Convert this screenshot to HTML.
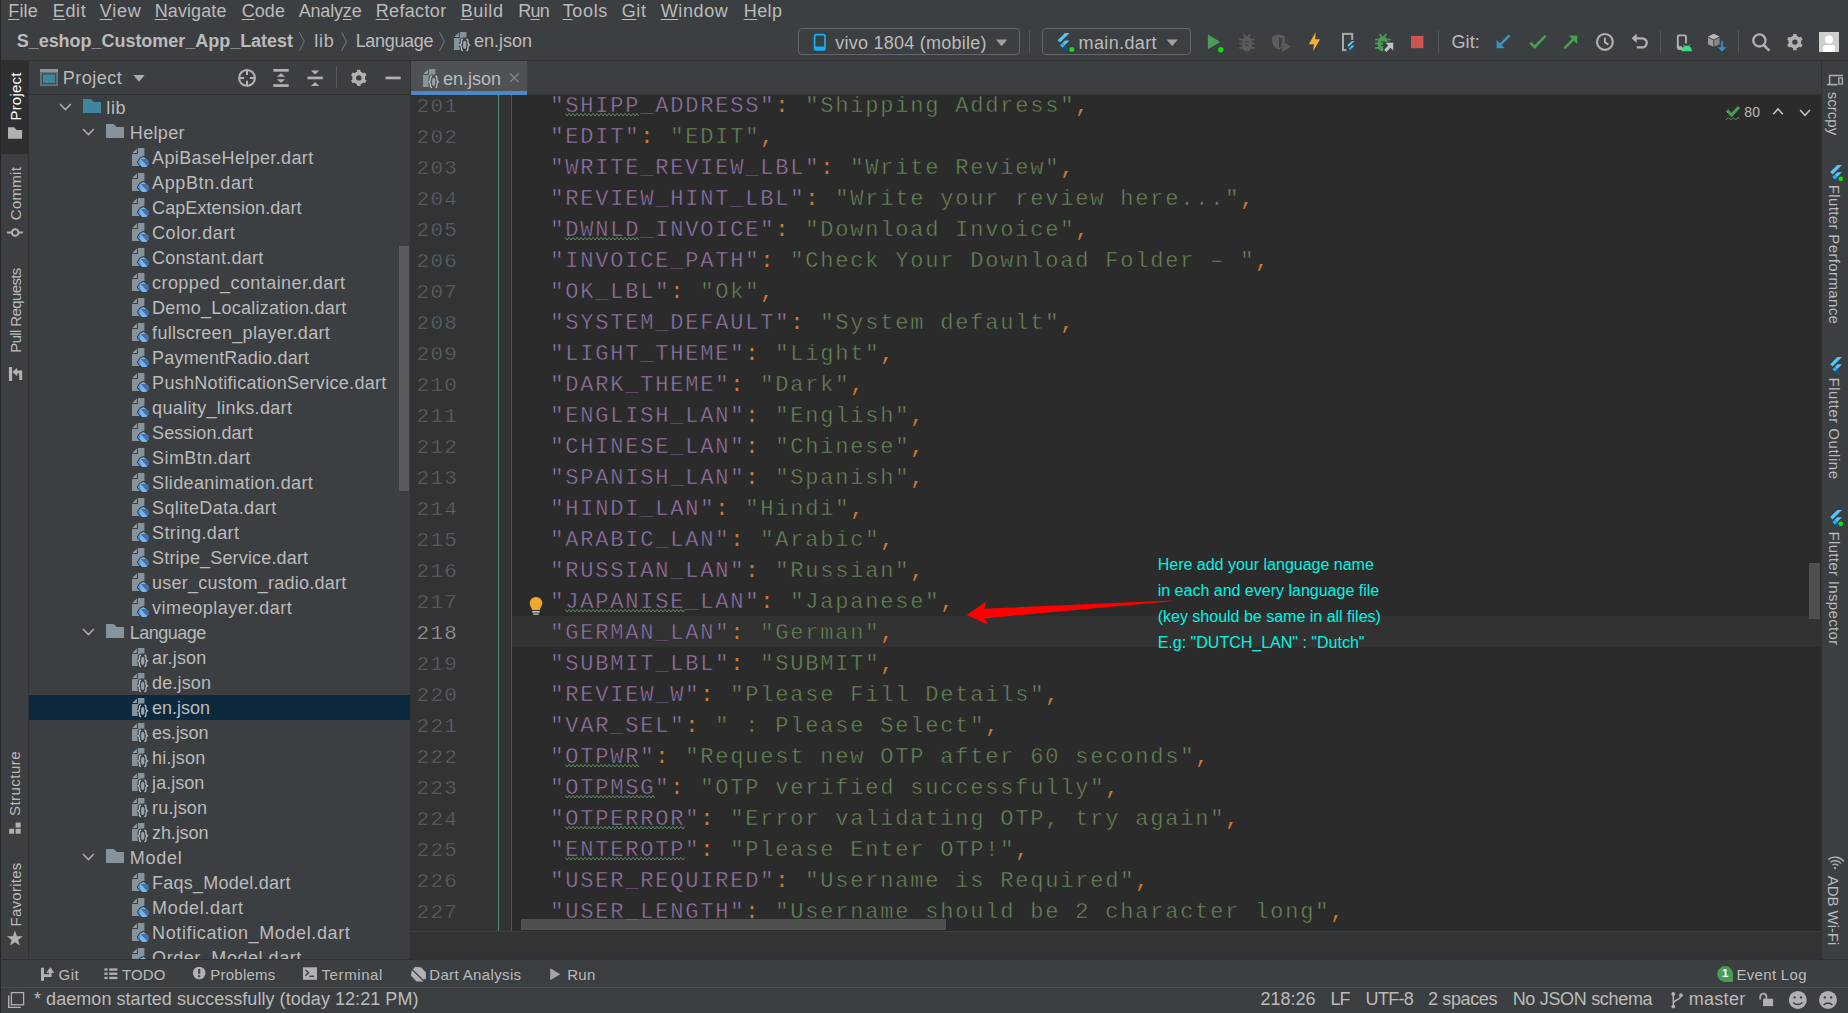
<!DOCTYPE html>
<html lang="en"><head><meta charset="utf-8"><title>en.json - S_eshop_Customer_App_Latest</title><style>
html,body{margin:0;padding:0;background:#3c3f41;}
body{width:1848px;height:1013px;position:relative;overflow:hidden;font-family:"Liberation Sans", sans-serif;}
div,span,svg{position:absolute;display:block;white-space:pre;}
span u{text-decoration:underline;text-underline-offset:2px;text-decoration-thickness:1px;}
.c{font-family:"Liberation Mono", monospace;font-size:22px;line-height:31px;height:31px;letter-spacing:1.798px;}
.c{-webkit-text-stroke:0.5px #2b2b2b;}
.c.n{-webkit-text-stroke:0.45px #313335;font-size:21px;letter-spacing:1.3px;}
.c b{font-weight:400;color:#9876aa;}
.c em{-webkit-text-stroke:0;}
.c var{font-style:normal;color:#6a8759;}
.c em{font-style:normal;color:#cc7832;}
</style></head>
<body>
<div style="left:0px;top:60px;width:1848px;height:1px;background:#323232;"></div>
<div style="left:0px;top:0px;width:1px;height:1013px;background:#232526;"></div>
<div style="left:1px;top:61px;width:28px;height:93px;background:#2d2f30;"></div>
<div style="left:28px;top:61px;width:1px;height:898px;background:#323232;"></div>
<div style="left:29px;top:94px;width:381px;height:1px;background:#323232;"></div>
<div style="left:410px;top:61px;width:1px;height:898px;background:#323232;"></div>
<div style="left:411px;top:61px;width:1411px;height:34px;background:#3c3f41;"></div>
<div style="left:411px;top:61px;width:116px;height:30px;background:#4e5254;"></div>
<div style="left:411px;top:91px;width:116px;height:4px;background:#4a88c7;"></div>
<div style="left:527px;top:94px;width:1295px;height:1px;background:#323232;"></div>
<div style="left:411px;top:95px;width:1411px;height:836px;background:#2b2b2b;"></div>
<div style="left:411px;top:95px;width:101px;height:836px;background:#313335;"></div>
<div style="left:498px;top:95px;width:1px;height:836px;background:#5a8a80;"></div>
<div style="left:511px;top:95px;width:1px;height:836px;background:#555555;"></div>
<div style="left:512px;top:616px;width:1310px;height:31px;background:#323232;"></div>
<div style="left:411px;top:931px;width:1411px;height:28px;background:#313335;"></div>
<div style="left:1809px;top:563px;width:11px;height:56px;background:#4f4f4f;"></div>
<div style="left:1822px;top:61px;width:26px;height:898px;background:#3c3f41;"></div>
<div style="left:1821px;top:61px;width:1px;height:898px;background:#323232;"></div>
<div style="left:411px;top:931px;width:1411px;height:1px;background:#3a3c3e;"></div>
<div style="left:0px;top:959px;width:1848px;height:1px;background:#323232;"></div>
<div style="left:1px;top:987px;width:1847px;height:1px;background:#4b4d4f;"></div>
<div style="left:29px;top:695px;width:381px;height:25px;background:#0d293e;"></div>
<div style="left:399px;top:246px;width:10px;height:245px;background:#595b5d;"></div>
<span style="left:8.20px;top:1.76px;font-size:18px;line-height:18px;color:#bbbbbb;letter-spacing:0.196px;"><u>F</u>ile</span>
<span style="left:52.70px;top:1.76px;font-size:18px;line-height:18px;color:#bbbbbb;letter-spacing:0.692px;"><u>E</u>dit</span>
<span style="left:99.70px;top:1.76px;font-size:18px;line-height:18px;color:#bbbbbb;letter-spacing:0.774px;"><u>V</u>iew</span>
<span style="left:154.70px;top:1.76px;font-size:18px;line-height:18px;color:#bbbbbb;letter-spacing:0.094px;"><u>N</u>avigate</span>
<span style="left:241.70px;top:1.76px;font-size:18px;line-height:18px;color:#bbbbbb;letter-spacing:0.067px;"><u>C</u>ode</span>
<span style="left:298.70px;top:1.76px;font-size:18px;line-height:18px;color:#bbbbbb;letter-spacing:-0.178px;">Analy<u>z</u>e</span>
<span style="left:375.70px;top:1.76px;font-size:18px;line-height:18px;color:#bbbbbb;letter-spacing:0.346px;"><u>R</u>efactor</span>
<span style="left:460.70px;top:1.76px;font-size:18px;line-height:18px;color:#bbbbbb;letter-spacing:0.554px;"><u>B</u>uild</span>
<span style="left:518.20px;top:1.76px;font-size:18px;line-height:18px;color:#bbbbbb;letter-spacing:-0.744px;">R<u>u</u>n</span>
<span style="left:562.70px;top:1.76px;font-size:18px;line-height:18px;color:#bbbbbb;letter-spacing:0.654px;"><u>T</u>ools</span>
<span style="left:621.70px;top:1.76px;font-size:18px;line-height:18px;color:#bbbbbb;letter-spacing:0.595px;"><u>G</u>it</span>
<span style="left:660.70px;top:1.76px;font-size:18px;line-height:18px;color:#bbbbbb;letter-spacing:0.628px;"><u>W</u>indow</span>
<span style="left:743.70px;top:1.76px;font-size:18px;line-height:18px;color:#bbbbbb;letter-spacing:0.442px;"><u>H</u>elp</span>
<span style="left:16.70px;top:32.26px;font-size:18px;line-height:18px;color:#bbbbbb;font-weight:700;letter-spacing:-0.029px;">S_eshop_Customer_App_Latest</span>
<span style="left:314.20px;top:32.26px;font-size:18px;line-height:18px;color:#bbbbbb;letter-spacing:0.828px;">lib</span>
<span style="left:355.70px;top:32.26px;font-size:18px;line-height:18px;color:#bbbbbb;letter-spacing:-0.324px;">Language</span>
<span style="left:474.00px;top:32.26px;font-size:18px;line-height:18px;color:#bbbbbb;letter-spacing:-0.007px;">en.json</span>
<span style="left:835.30px;top:33.76px;font-size:18px;line-height:18px;color:#bbbbbb;letter-spacing:0.246px;">vivo 1804 (mobile)</span>
<span style="left:1078.50px;top:33.76px;font-size:18px;line-height:18px;color:#bbbbbb;letter-spacing:0.384px;">main.dart</span>
<span style="left:1451.50px;top:32.76px;font-size:18px;line-height:18px;color:#bbbbbb;letter-spacing:0.121px;">Git:</span>
<span style="left:62.80px;top:68.76px;font-size:18px;line-height:18px;color:#bbbbbb;letter-spacing:0.481px;">Project</span>
<span style="left:443.00px;top:69.76px;font-size:18px;line-height:18px;color:#bbbbbb;letter-spacing:-0.007px;">en.json</span>
<div style="left:29px;top:95px;width:381px;height:864px;overflow:hidden;background:none">
<span style="left:77.30px;top:3.76px;font-size:18px;line-height:18px;color:#bbbbbb;letter-spacing:0.661px;">lib</span>
<span style="left:100.80px;top:28.76px;font-size:18px;line-height:18px;color:#bbbbbb;letter-spacing:0.345px;">Helper</span>
<span style="left:123.10px;top:53.76px;font-size:18px;line-height:18px;color:#bbbbbb;letter-spacing:0.350px;">ApiBaseHelper.dart</span>
<span style="left:123.10px;top:78.76px;font-size:18px;line-height:18px;color:#bbbbbb;letter-spacing:0.594px;">AppBtn.dart</span>
<span style="left:123.10px;top:103.76px;font-size:18px;line-height:18px;color:#bbbbbb;letter-spacing:0.083px;">CapExtension.dart</span>
<span style="left:123.10px;top:128.76px;font-size:18px;line-height:18px;color:#bbbbbb;letter-spacing:0.515px;">Color.dart</span>
<span style="left:123.10px;top:153.76px;font-size:18px;line-height:18px;color:#bbbbbb;letter-spacing:0.249px;">Constant.dart</span>
<span style="left:123.10px;top:178.76px;font-size:18px;line-height:18px;color:#bbbbbb;letter-spacing:0.421px;">cropped_container.dart</span>
<span style="left:123.10px;top:203.76px;font-size:18px;line-height:18px;color:#bbbbbb;letter-spacing:0.236px;">Demo_Localization.dart</span>
<span style="left:123.10px;top:228.76px;font-size:18px;line-height:18px;color:#bbbbbb;letter-spacing:0.313px;">fullscreen_player.dart</span>
<span style="left:123.10px;top:253.76px;font-size:18px;line-height:18px;color:#bbbbbb;letter-spacing:0.177px;">PaymentRadio.dart</span>
<span style="left:123.10px;top:278.76px;font-size:18px;line-height:18px;color:#bbbbbb;letter-spacing:0.300px;">PushNotificationService.dart</span>
<span style="left:123.10px;top:303.76px;font-size:18px;line-height:18px;color:#bbbbbb;letter-spacing:0.340px;">quality_links.dart</span>
<span style="left:123.10px;top:328.76px;font-size:18px;line-height:18px;color:#bbbbbb;letter-spacing:0.045px;">Session.dart</span>
<span style="left:123.10px;top:353.76px;font-size:18px;line-height:18px;color:#bbbbbb;letter-spacing:0.423px;">SimBtn.dart</span>
<span style="left:123.10px;top:378.76px;font-size:18px;line-height:18px;color:#bbbbbb;letter-spacing:0.369px;">Slideanimation.dart</span>
<span style="left:123.10px;top:403.76px;font-size:18px;line-height:18px;color:#bbbbbb;letter-spacing:0.361px;">SqliteData.dart</span>
<span style="left:123.10px;top:428.76px;font-size:18px;line-height:18px;color:#bbbbbb;letter-spacing:0.387px;">String.dart</span>
<span style="left:123.10px;top:453.76px;font-size:18px;line-height:18px;color:#bbbbbb;letter-spacing:0.164px;">Stripe_Service.dart</span>
<span style="left:123.10px;top:478.76px;font-size:18px;line-height:18px;color:#bbbbbb;letter-spacing:0.236px;">user_custom_radio.dart</span>
<span style="left:123.10px;top:503.76px;font-size:18px;line-height:18px;color:#bbbbbb;letter-spacing:0.514px;">vimeoplayer.dart</span>
<span style="left:100.80px;top:528.76px;font-size:18px;line-height:18px;color:#bbbbbb;letter-spacing:-0.512px;">Language</span>
<span style="left:123.10px;top:553.76px;font-size:18px;line-height:18px;color:#bbbbbb;letter-spacing:0.193px;">ar.json</span>
<span style="left:123.10px;top:578.76px;font-size:18px;line-height:18px;color:#bbbbbb;letter-spacing:0.136px;">de.json</span>
<span style="left:123.10px;top:603.76px;font-size:18px;line-height:18px;color:#bbbbbb;letter-spacing:-0.007px;">en.json</span>
<span style="left:123.10px;top:628.76px;font-size:18px;line-height:18px;color:#bbbbbb;letter-spacing:-0.121px;">es.json</span>
<span style="left:123.10px;top:653.76px;font-size:18px;line-height:18px;color:#bbbbbb;letter-spacing:0.181px;">hi.json</span>
<span style="left:123.10px;top:678.76px;font-size:18px;line-height:18px;color:#bbbbbb;letter-spacing:0.038px;">ja.json</span>
<span style="left:123.10px;top:703.76px;font-size:18px;line-height:18px;color:#bbbbbb;letter-spacing:0.153px;">ru.json</span>
<span style="left:123.10px;top:728.76px;font-size:18px;line-height:18px;color:#bbbbbb;letter-spacing:-0.121px;">zh.json</span>
<span style="left:100.80px;top:753.76px;font-size:18px;line-height:18px;color:#bbbbbb;letter-spacing:0.714px;">Model</span>
<span style="left:123.10px;top:778.76px;font-size:18px;line-height:18px;color:#bbbbbb;letter-spacing:0.235px;">Faqs_Model.dart</span>
<span style="left:123.10px;top:803.76px;font-size:18px;line-height:18px;color:#bbbbbb;letter-spacing:0.665px;">Model.dart</span>
<span style="left:123.10px;top:828.76px;font-size:18px;line-height:18px;color:#bbbbbb;letter-spacing:0.617px;">Notification_Model.dart</span>
<span style="left:123.10px;top:853.76px;font-size:18px;line-height:18px;color:#bbbbbb;letter-spacing:0.539px;">Order_Model.dart</span>
</div>
<span style="left:-9.30px;top:88.90px;width:48.20px;height:15px;font-size:15px;line-height:15px;color:#ffffff;letter-spacing:0.216px;transform:rotate(-90deg);">Project</span>
<span style="left:-11.10px;top:186.00px;width:53.40px;height:15px;font-size:15px;line-height:15px;color:#bbbbbb;letter-spacing:0.288px;transform:rotate(-90deg);">Commit</span>
<span style="left:-27.45px;top:303.05px;width:84.50px;height:15px;font-size:15px;line-height:15px;color:#bbbbbb;letter-spacing:-0.620px;transform:rotate(-90deg);">Pull Requests</span>
<span style="left:-17.70px;top:776.00px;width:65.00px;height:15px;font-size:15px;line-height:15px;color:#bbbbbb;letter-spacing:0.460px;transform:rotate(-90deg);">Structure</span>
<span style="left:-17.20px;top:886.80px;width:64.00px;height:15px;font-size:15px;line-height:15px;color:#bbbbbb;letter-spacing:0.257px;transform:rotate(-90deg);">Favorites</span>
<span style="left:1812.45px;top:106.25px;width:43.50px;height:15px;font-size:15px;line-height:15px;color:#bbbbbb;letter-spacing:0.026px;transform:rotate(90deg);">scrcpy</span>
<span style="left:1765.10px;top:247.30px;width:139.60px;height:15px;font-size:15px;line-height:15px;color:#bbbbbb;letter-spacing:0.371px;transform:rotate(90deg);">Flutter Performance</span>
<span style="left:1783.20px;top:421.00px;width:102.00px;height:15px;font-size:15px;line-height:15px;color:#bbbbbb;letter-spacing:0.519px;transform:rotate(90deg);">Flutter Outline</span>
<span style="left:1777.20px;top:580.50px;width:114.00px;height:15px;font-size:15px;line-height:15px;color:#bbbbbb;letter-spacing:0.330px;transform:rotate(90deg);">Flutter Inspector</span>
<span style="left:1799.45px;top:902.75px;width:69.50px;height:15px;font-size:15px;line-height:15px;color:#bbbbbb;letter-spacing:-0.056px;transform:rotate(90deg);">ADB Wi-Fi</span>
<span style="left:58.50px;top:967.30px;font-size:15px;line-height:15px;color:#bbbbbb;letter-spacing:0.526px;">Git</span>
<span style="left:122.00px;top:967.30px;font-size:15px;line-height:15px;color:#bbbbbb;letter-spacing:0.109px;">TODO</span>
<span style="left:210.25px;top:967.30px;font-size:15px;line-height:15px;color:#bbbbbb;letter-spacing:0.236px;">Problems</span>
<span style="left:321.50px;top:967.30px;font-size:15px;line-height:15px;color:#bbbbbb;letter-spacing:0.602px;">Terminal</span>
<span style="left:429.20px;top:967.30px;font-size:15px;line-height:15px;color:#bbbbbb;letter-spacing:0.366px;">Dart Analysis</span>
<span style="left:567.20px;top:967.30px;font-size:15px;line-height:15px;color:#bbbbbb;letter-spacing:0.290px;">Run</span>
<span style="left:1736.40px;top:967.30px;font-size:15px;line-height:15px;color:#bbbbbb;letter-spacing:0.326px;">Event Log</span>
<span style="left:34.00px;top:990.26px;font-size:18px;line-height:18px;color:#bbbbbb;letter-spacing:0.050px;">* daemon started successfully (today 12:21 PM)</span>
<span style="left:1260.40px;top:990.26px;font-size:18px;line-height:18px;color:#bbbbbb;letter-spacing:0.006px;">218:26</span>
<span style="left:1330.40px;top:990.26px;font-size:18px;line-height:18px;color:#bbbbbb;letter-spacing:-0.858px;">LF</span>
<span style="left:1365.60px;top:990.26px;font-size:18px;line-height:18px;color:#bbbbbb;letter-spacing:-0.680px;">UTF-8</span>
<span style="left:1428.00px;top:990.26px;font-size:18px;line-height:18px;color:#bbbbbb;letter-spacing:-0.368px;">2 spaces</span>
<span style="left:1512.70px;top:990.26px;font-size:18px;line-height:18px;color:#bbbbbb;letter-spacing:-0.318px;">No JSON schema</span>
<span style="left:1688.70px;top:990.26px;font-size:18px;line-height:18px;color:#bbbbbb;letter-spacing:0.297px;">master</span>
<span style="left:1744.20px;top:105.15px;font-size:14px;line-height:14px;color:#bbbbbb;letter-spacing:0.211px;">80</span>
<div style="left:411px;top:95px;width:1411px;height:836px;overflow:hidden;background:none">
<span class="c n" style="left:5.5px;top:-4px;color:#606366">201</span>
<svg style="left:154.29999999999995px;top:17.9px" width="75" height="3.4" viewBox="0 0 75 3.4"><polyline points="0.0 0.4 2.0 3.0 4.0 0.4 6.0 3.0 8.0 0.4 10.0 3.0 12.0 0.4 14.0 3.0 16.0 0.4 18.0 3.0 20.0 0.4 22.0 3.0 24.0 0.4 26.0 3.0 28.0 0.4 30.0 3.0 32.0 0.4 34.0 3.0 36.0 0.4 38.0 3.0 40.0 0.4 42.0 3.0 44.0 0.4 46.0 3.0 48.0 0.4 50.0 3.0 52.0 0.4 54.0 3.0 56.0 0.4 58.0 3.0 60.0 0.4 62.0 3.0 64.0 0.4 66.0 3.0 68.0 0.4 70.0 3.0 72.0 0.4 74.0 3.0" fill="none" stroke="#5f9a62" stroke-width="0.9"/></svg>
<span class="c" style="left:139.29999999999995px;top:-4px"><b>"SHIPP_ADDRESS"</b><em>:</em> <var>"Shipping Address"</var><em>,</em></span>
<span class="c n" style="left:5.5px;top:27px;color:#606366">202</span>
<span class="c" style="left:139.29999999999995px;top:27px"><b>"EDIT"</b><em>:</em> <var>"EDIT"</var><em>,</em></span>
<span class="c n" style="left:5.5px;top:58px;color:#606366">203</span>
<span class="c" style="left:139.29999999999995px;top:58px"><b>"WRITE_REVIEW_LBL"</b><em>:</em> <var>"Write Review"</var><em>,</em></span>
<span class="c n" style="left:5.5px;top:89px;color:#606366">204</span>
<span class="c" style="left:139.29999999999995px;top:89px"><b>"REVIEW_HINT_LBL"</b><em>:</em> <var>"Write your review here..."</var><em>,</em></span>
<span class="c n" style="left:5.5px;top:120px;color:#606366">205</span>
<svg style="left:154.29999999999995px;top:141.9px" width="75" height="3.4" viewBox="0 0 75 3.4"><polyline points="0.0 0.4 2.0 3.0 4.0 0.4 6.0 3.0 8.0 0.4 10.0 3.0 12.0 0.4 14.0 3.0 16.0 0.4 18.0 3.0 20.0 0.4 22.0 3.0 24.0 0.4 26.0 3.0 28.0 0.4 30.0 3.0 32.0 0.4 34.0 3.0 36.0 0.4 38.0 3.0 40.0 0.4 42.0 3.0 44.0 0.4 46.0 3.0 48.0 0.4 50.0 3.0 52.0 0.4 54.0 3.0 56.0 0.4 58.0 3.0 60.0 0.4 62.0 3.0 64.0 0.4 66.0 3.0 68.0 0.4 70.0 3.0 72.0 0.4 74.0 3.0" fill="none" stroke="#5f9a62" stroke-width="0.9"/></svg>
<span class="c" style="left:139.29999999999995px;top:120px"><b>"DWNLD_INVOICE"</b><em>:</em> <var>"Download Invoice"</var><em>,</em></span>
<span class="c n" style="left:5.5px;top:151px;color:#606366">206</span>
<span class="c" style="left:139.29999999999995px;top:151px"><b>"INVOICE_PATH"</b><em>:</em> <var>"Check Your Download Folder – "</var><em>,</em></span>
<span class="c n" style="left:5.5px;top:182px;color:#606366">207</span>
<span class="c" style="left:139.29999999999995px;top:182px"><b>"OK_LBL"</b><em>:</em> <var>"Ok"</var><em>,</em></span>
<span class="c n" style="left:5.5px;top:213px;color:#606366">208</span>
<span class="c" style="left:139.29999999999995px;top:213px"><b>"SYSTEM_DEFAULT"</b><em>:</em> <var>"System default"</var><em>,</em></span>
<span class="c n" style="left:5.5px;top:244px;color:#606366">209</span>
<span class="c" style="left:139.29999999999995px;top:244px"><b>"LIGHT_THEME"</b><em>:</em> <var>"Light"</var><em>,</em></span>
<span class="c n" style="left:5.5px;top:275px;color:#606366">210</span>
<span class="c" style="left:139.29999999999995px;top:275px"><b>"DARK_THEME"</b><em>:</em> <var>"Dark"</var><em>,</em></span>
<span class="c n" style="left:5.5px;top:306px;color:#606366">211</span>
<span class="c" style="left:139.29999999999995px;top:306px"><b>"ENGLISH_LAN"</b><em>:</em> <var>"English"</var><em>,</em></span>
<span class="c n" style="left:5.5px;top:337px;color:#606366">212</span>
<span class="c" style="left:139.29999999999995px;top:337px"><b>"CHINESE_LAN"</b><em>:</em> <var>"Chinese"</var><em>,</em></span>
<span class="c n" style="left:5.5px;top:368px;color:#606366">213</span>
<span class="c" style="left:139.29999999999995px;top:368px"><b>"SPANISH_LAN"</b><em>:</em> <var>"Spanish"</var><em>,</em></span>
<span class="c n" style="left:5.5px;top:399px;color:#606366">214</span>
<span class="c" style="left:139.29999999999995px;top:399px"><b>"HINDI_LAN"</b><em>:</em> <var>"Hindi"</var><em>,</em></span>
<span class="c n" style="left:5.5px;top:430px;color:#606366">215</span>
<span class="c" style="left:139.29999999999995px;top:430px"><b>"ARABIC_LAN"</b><em>:</em> <var>"Arabic"</var><em>,</em></span>
<span class="c n" style="left:5.5px;top:461px;color:#606366">216</span>
<span class="c" style="left:139.29999999999995px;top:461px"><b>"RUSSIAN_LAN"</b><em>:</em> <var>"Russian"</var><em>,</em></span>
<span class="c n" style="left:5.5px;top:492px;color:#606366">217</span>
<svg style="left:154.29999999999995px;top:513.9px" width="120" height="3.4" viewBox="0 0 120 3.4"><polyline points="0.0 0.4 2.0 3.0 4.0 0.4 6.0 3.0 8.0 0.4 10.0 3.0 12.0 0.4 14.0 3.0 16.0 0.4 18.0 3.0 20.0 0.4 22.0 3.0 24.0 0.4 26.0 3.0 28.0 0.4 30.0 3.0 32.0 0.4 34.0 3.0 36.0 0.4 38.0 3.0 40.0 0.4 42.0 3.0 44.0 0.4 46.0 3.0 48.0 0.4 50.0 3.0 52.0 0.4 54.0 3.0 56.0 0.4 58.0 3.0 60.0 0.4 62.0 3.0 64.0 0.4 66.0 3.0 68.0 0.4 70.0 3.0 72.0 0.4 74.0 3.0 76.0 0.4 78.0 3.0 80.0 0.4 82.0 3.0 84.0 0.4 86.0 3.0 88.0 0.4 90.0 3.0 92.0 0.4 94.0 3.0 96.0 0.4 98.0 3.0 100.0 0.4 102.0 3.0 104.0 0.4 106.0 3.0 108.0 0.4 110.0 3.0 112.0 0.4 114.0 3.0 116.0 0.4 118.0 3.0 120.0 0.4" fill="none" stroke="#5f9a62" stroke-width="0.9"/></svg>
<span class="c" style="left:139.29999999999995px;top:492px"><b>"JAPANISE_LAN"</b><em>:</em> <var>"Japanese"</var><em>,</em></span>
<span class="c n" style="left:5.5px;top:523px;color:#a4a3a3">218</span>
<span class="c" style="left:139.29999999999995px;top:523px"><b>"GERMAN_LAN"</b><em>:</em> <var>"German"</var><em>,</em></span>
<span class="c n" style="left:5.5px;top:554px;color:#606366">219</span>
<span class="c" style="left:139.29999999999995px;top:554px"><b>"SUBMIT_LBL"</b><em>:</em> <var>"SUBMIT"</var><em>,</em></span>
<span class="c n" style="left:5.5px;top:585px;color:#606366">220</span>
<span class="c" style="left:139.29999999999995px;top:585px"><b>"REVIEW_W"</b><em>:</em> <var>"Please Fill Details"</var><em>,</em></span>
<span class="c n" style="left:5.5px;top:616px;color:#606366">221</span>
<span class="c" style="left:139.29999999999995px;top:616px"><b>"VAR_SEL"</b><em>:</em> <var>" : Please Select"</var><em>,</em></span>
<span class="c n" style="left:5.5px;top:647px;color:#606366">222</span>
<svg style="left:154.29999999999995px;top:668.9px" width="75" height="3.4" viewBox="0 0 75 3.4"><polyline points="0.0 0.4 2.0 3.0 4.0 0.4 6.0 3.0 8.0 0.4 10.0 3.0 12.0 0.4 14.0 3.0 16.0 0.4 18.0 3.0 20.0 0.4 22.0 3.0 24.0 0.4 26.0 3.0 28.0 0.4 30.0 3.0 32.0 0.4 34.0 3.0 36.0 0.4 38.0 3.0 40.0 0.4 42.0 3.0 44.0 0.4 46.0 3.0 48.0 0.4 50.0 3.0 52.0 0.4 54.0 3.0 56.0 0.4 58.0 3.0 60.0 0.4 62.0 3.0 64.0 0.4 66.0 3.0 68.0 0.4 70.0 3.0 72.0 0.4 74.0 3.0" fill="none" stroke="#5f9a62" stroke-width="0.9"/></svg>
<span class="c" style="left:139.29999999999995px;top:647px"><b>"OTPWR"</b><em>:</em> <var>"Request new OTP after 60 seconds"</var><em>,</em></span>
<span class="c n" style="left:5.5px;top:678px;color:#606366">223</span>
<svg style="left:154.29999999999995px;top:699.9px" width="90" height="3.4" viewBox="0 0 90 3.4"><polyline points="0.0 0.4 2.0 3.0 4.0 0.4 6.0 3.0 8.0 0.4 10.0 3.0 12.0 0.4 14.0 3.0 16.0 0.4 18.0 3.0 20.0 0.4 22.0 3.0 24.0 0.4 26.0 3.0 28.0 0.4 30.0 3.0 32.0 0.4 34.0 3.0 36.0 0.4 38.0 3.0 40.0 0.4 42.0 3.0 44.0 0.4 46.0 3.0 48.0 0.4 50.0 3.0 52.0 0.4 54.0 3.0 56.0 0.4 58.0 3.0 60.0 0.4 62.0 3.0 64.0 0.4 66.0 3.0 68.0 0.4 70.0 3.0 72.0 0.4 74.0 3.0 76.0 0.4 78.0 3.0 80.0 0.4 82.0 3.0 84.0 0.4 86.0 3.0 88.0 0.4 90.0 3.0" fill="none" stroke="#5f9a62" stroke-width="0.9"/></svg>
<span class="c" style="left:139.29999999999995px;top:678px"><b>"OTPMSG"</b><em>:</em> <var>"OTP verified successfully"</var><em>,</em></span>
<span class="c n" style="left:5.5px;top:709px;color:#606366">224</span>
<svg style="left:154.29999999999995px;top:730.9px" width="120" height="3.4" viewBox="0 0 120 3.4"><polyline points="0.0 0.4 2.0 3.0 4.0 0.4 6.0 3.0 8.0 0.4 10.0 3.0 12.0 0.4 14.0 3.0 16.0 0.4 18.0 3.0 20.0 0.4 22.0 3.0 24.0 0.4 26.0 3.0 28.0 0.4 30.0 3.0 32.0 0.4 34.0 3.0 36.0 0.4 38.0 3.0 40.0 0.4 42.0 3.0 44.0 0.4 46.0 3.0 48.0 0.4 50.0 3.0 52.0 0.4 54.0 3.0 56.0 0.4 58.0 3.0 60.0 0.4 62.0 3.0 64.0 0.4 66.0 3.0 68.0 0.4 70.0 3.0 72.0 0.4 74.0 3.0 76.0 0.4 78.0 3.0 80.0 0.4 82.0 3.0 84.0 0.4 86.0 3.0 88.0 0.4 90.0 3.0 92.0 0.4 94.0 3.0 96.0 0.4 98.0 3.0 100.0 0.4 102.0 3.0 104.0 0.4 106.0 3.0 108.0 0.4 110.0 3.0 112.0 0.4 114.0 3.0 116.0 0.4 118.0 3.0 120.0 0.4" fill="none" stroke="#5f9a62" stroke-width="0.9"/></svg>
<span class="c" style="left:139.29999999999995px;top:709px"><b>"OTPERROR"</b><em>:</em> <var>"Error validating OTP, try again"</var><em>,</em></span>
<span class="c n" style="left:5.5px;top:740px;color:#606366">225</span>
<svg style="left:154.29999999999995px;top:761.9px" width="120" height="3.4" viewBox="0 0 120 3.4"><polyline points="0.0 0.4 2.0 3.0 4.0 0.4 6.0 3.0 8.0 0.4 10.0 3.0 12.0 0.4 14.0 3.0 16.0 0.4 18.0 3.0 20.0 0.4 22.0 3.0 24.0 0.4 26.0 3.0 28.0 0.4 30.0 3.0 32.0 0.4 34.0 3.0 36.0 0.4 38.0 3.0 40.0 0.4 42.0 3.0 44.0 0.4 46.0 3.0 48.0 0.4 50.0 3.0 52.0 0.4 54.0 3.0 56.0 0.4 58.0 3.0 60.0 0.4 62.0 3.0 64.0 0.4 66.0 3.0 68.0 0.4 70.0 3.0 72.0 0.4 74.0 3.0 76.0 0.4 78.0 3.0 80.0 0.4 82.0 3.0 84.0 0.4 86.0 3.0 88.0 0.4 90.0 3.0 92.0 0.4 94.0 3.0 96.0 0.4 98.0 3.0 100.0 0.4 102.0 3.0 104.0 0.4 106.0 3.0 108.0 0.4 110.0 3.0 112.0 0.4 114.0 3.0 116.0 0.4 118.0 3.0 120.0 0.4" fill="none" stroke="#5f9a62" stroke-width="0.9"/></svg>
<span class="c" style="left:139.29999999999995px;top:740px"><b>"ENTEROTP"</b><em>:</em> <var>"Please Enter OTP!"</var><em>,</em></span>
<span class="c n" style="left:5.5px;top:771px;color:#606366">226</span>
<span class="c" style="left:139.29999999999995px;top:771px"><b>"USER_REQUIRED"</b><em>:</em> <var>"Username is Required"</var><em>,</em></span>
<span class="c n" style="left:5.5px;top:802px;color:#606366">227</span>
<span class="c" style="left:139.29999999999995px;top:802px"><b>"USER_LENGTH"</b><em>:</em> <var>"Username should be 2 character long"</var><em>,</em></span>
</div>
<div style="left:521px;top:919px;width:425px;height:11px;background:rgba(128,128,128,0.42);"></div>
<span style="left:1157.70px;top:557.36px;font-size:16px;line-height:16px;color:#04f2e4;">Here add your language name</span>
<span style="left:1157.70px;top:583.26px;font-size:16px;line-height:16px;color:#04f2e4;">in each and every language file</span>
<span style="left:1157.70px;top:609.16px;font-size:16px;line-height:16px;color:#04f2e4;">(key should be same in all files)</span>
<span style="left:1157.70px;top:635.06px;font-size:16px;line-height:16px;color:#04f2e4;">E.g: &quot;DUTCH_LAN&quot; : &quot;Dutch&quot;</span>
<svg style="left:950px;top:590px" width="240" height="50" viewBox="950 590 240 50"><path d="M966.8 615 L986.5 601.2 L984.2 608.7 L1171.5 600.4 L1171.5 601.3 L984.5 618.4 L988.4 624.9 Z" fill="#fe0000"/></svg>
<svg style="left:58.6px;top:103.1px;" width="13" height="9" viewBox="0 0 13 9"><path d="M1 1 L6.4 6.6 L11.8 1" fill="none" stroke="#adadad" stroke-width="1.5"/></svg>
<svg style="left:83.1px;top:99.2px;" width="18" height="14" viewBox="0 0 18 14"><path d="M0 0 H7.6 L10.8 3 H18 V14 H0 Z" fill="#3e86a0"/></svg>
<svg style="left:81.5px;top:128.1px;" width="13" height="9" viewBox="0 0 13 9"><path d="M1 1 L6.4 6.6 L11.8 1" fill="none" stroke="#adadad" stroke-width="1.5"/></svg>
<svg style="left:106px;top:124.2px;" width="18" height="14" viewBox="0 0 18 14"><path d="M0 0 H7.6 L10.8 3 H18 V14 H0 Z" fill="#87939a"/></svg>

<svg style="left:131.8px;top:148.2px;" width="18" height="20" viewBox="0 0 18 20"><path d="M5.9 0 H12.4 V18 H0 V5.9 H5.9 Z" fill="#87939a"/><path d="M0.4 4.9 L4.9 0.4 V4.9 Z" fill="#909ca3"/><path d="M11.5 8.9 L16.3 12.8 L16.3 16.8 L14.3 19.1 L10 19.1 L6 14.3 L8.1 10.8 Z" fill="#3c3f41" stroke="#3c3f41" stroke-width="2.2" stroke-linejoin="round"/><path d="M11.5 8.9 L16.3 12.8 L16.3 16.8 L14.3 19.1 L10 19.1 L6 14.3 L8.1 10.8 Z" fill="#72b7f4"/><path d="M8.7 11 L14.2 11 L16.3 12.8 L16.3 16.8 L15.2 18.2 Z" fill="#4b6da6"/><path d="M6 14.3 L8.1 10.8 L8.1 16.8 Z" fill="#5a8bd6"/></svg>

<svg style="left:131.8px;top:173.2px;" width="18" height="20" viewBox="0 0 18 20"><path d="M5.9 0 H12.4 V18 H0 V5.9 H5.9 Z" fill="#87939a"/><path d="M0.4 4.9 L4.9 0.4 V4.9 Z" fill="#909ca3"/><path d="M11.5 8.9 L16.3 12.8 L16.3 16.8 L14.3 19.1 L10 19.1 L6 14.3 L8.1 10.8 Z" fill="#3c3f41" stroke="#3c3f41" stroke-width="2.2" stroke-linejoin="round"/><path d="M11.5 8.9 L16.3 12.8 L16.3 16.8 L14.3 19.1 L10 19.1 L6 14.3 L8.1 10.8 Z" fill="#72b7f4"/><path d="M8.7 11 L14.2 11 L16.3 12.8 L16.3 16.8 L15.2 18.2 Z" fill="#4b6da6"/><path d="M6 14.3 L8.1 10.8 L8.1 16.8 Z" fill="#5a8bd6"/></svg>

<svg style="left:131.8px;top:198.2px;" width="18" height="20" viewBox="0 0 18 20"><path d="M5.9 0 H12.4 V18 H0 V5.9 H5.9 Z" fill="#87939a"/><path d="M0.4 4.9 L4.9 0.4 V4.9 Z" fill="#909ca3"/><path d="M11.5 8.9 L16.3 12.8 L16.3 16.8 L14.3 19.1 L10 19.1 L6 14.3 L8.1 10.8 Z" fill="#3c3f41" stroke="#3c3f41" stroke-width="2.2" stroke-linejoin="round"/><path d="M11.5 8.9 L16.3 12.8 L16.3 16.8 L14.3 19.1 L10 19.1 L6 14.3 L8.1 10.8 Z" fill="#72b7f4"/><path d="M8.7 11 L14.2 11 L16.3 12.8 L16.3 16.8 L15.2 18.2 Z" fill="#4b6da6"/><path d="M6 14.3 L8.1 10.8 L8.1 16.8 Z" fill="#5a8bd6"/></svg>

<svg style="left:131.8px;top:223.2px;" width="18" height="20" viewBox="0 0 18 20"><path d="M5.9 0 H12.4 V18 H0 V5.9 H5.9 Z" fill="#87939a"/><path d="M0.4 4.9 L4.9 0.4 V4.9 Z" fill="#909ca3"/><path d="M11.5 8.9 L16.3 12.8 L16.3 16.8 L14.3 19.1 L10 19.1 L6 14.3 L8.1 10.8 Z" fill="#3c3f41" stroke="#3c3f41" stroke-width="2.2" stroke-linejoin="round"/><path d="M11.5 8.9 L16.3 12.8 L16.3 16.8 L14.3 19.1 L10 19.1 L6 14.3 L8.1 10.8 Z" fill="#72b7f4"/><path d="M8.7 11 L14.2 11 L16.3 12.8 L16.3 16.8 L15.2 18.2 Z" fill="#4b6da6"/><path d="M6 14.3 L8.1 10.8 L8.1 16.8 Z" fill="#5a8bd6"/></svg>

<svg style="left:131.8px;top:248.2px;" width="18" height="20" viewBox="0 0 18 20"><path d="M5.9 0 H12.4 V18 H0 V5.9 H5.9 Z" fill="#87939a"/><path d="M0.4 4.9 L4.9 0.4 V4.9 Z" fill="#909ca3"/><path d="M11.5 8.9 L16.3 12.8 L16.3 16.8 L14.3 19.1 L10 19.1 L6 14.3 L8.1 10.8 Z" fill="#3c3f41" stroke="#3c3f41" stroke-width="2.2" stroke-linejoin="round"/><path d="M11.5 8.9 L16.3 12.8 L16.3 16.8 L14.3 19.1 L10 19.1 L6 14.3 L8.1 10.8 Z" fill="#72b7f4"/><path d="M8.7 11 L14.2 11 L16.3 12.8 L16.3 16.8 L15.2 18.2 Z" fill="#4b6da6"/><path d="M6 14.3 L8.1 10.8 L8.1 16.8 Z" fill="#5a8bd6"/></svg>

<svg style="left:131.8px;top:273.2px;" width="18" height="20" viewBox="0 0 18 20"><path d="M5.9 0 H12.4 V18 H0 V5.9 H5.9 Z" fill="#87939a"/><path d="M0.4 4.9 L4.9 0.4 V4.9 Z" fill="#909ca3"/><path d="M11.5 8.9 L16.3 12.8 L16.3 16.8 L14.3 19.1 L10 19.1 L6 14.3 L8.1 10.8 Z" fill="#3c3f41" stroke="#3c3f41" stroke-width="2.2" stroke-linejoin="round"/><path d="M11.5 8.9 L16.3 12.8 L16.3 16.8 L14.3 19.1 L10 19.1 L6 14.3 L8.1 10.8 Z" fill="#72b7f4"/><path d="M8.7 11 L14.2 11 L16.3 12.8 L16.3 16.8 L15.2 18.2 Z" fill="#4b6da6"/><path d="M6 14.3 L8.1 10.8 L8.1 16.8 Z" fill="#5a8bd6"/></svg>

<svg style="left:131.8px;top:298.2px;" width="18" height="20" viewBox="0 0 18 20"><path d="M5.9 0 H12.4 V18 H0 V5.9 H5.9 Z" fill="#87939a"/><path d="M0.4 4.9 L4.9 0.4 V4.9 Z" fill="#909ca3"/><path d="M11.5 8.9 L16.3 12.8 L16.3 16.8 L14.3 19.1 L10 19.1 L6 14.3 L8.1 10.8 Z" fill="#3c3f41" stroke="#3c3f41" stroke-width="2.2" stroke-linejoin="round"/><path d="M11.5 8.9 L16.3 12.8 L16.3 16.8 L14.3 19.1 L10 19.1 L6 14.3 L8.1 10.8 Z" fill="#72b7f4"/><path d="M8.7 11 L14.2 11 L16.3 12.8 L16.3 16.8 L15.2 18.2 Z" fill="#4b6da6"/><path d="M6 14.3 L8.1 10.8 L8.1 16.8 Z" fill="#5a8bd6"/></svg>

<svg style="left:131.8px;top:323.2px;" width="18" height="20" viewBox="0 0 18 20"><path d="M5.9 0 H12.4 V18 H0 V5.9 H5.9 Z" fill="#87939a"/><path d="M0.4 4.9 L4.9 0.4 V4.9 Z" fill="#909ca3"/><path d="M11.5 8.9 L16.3 12.8 L16.3 16.8 L14.3 19.1 L10 19.1 L6 14.3 L8.1 10.8 Z" fill="#3c3f41" stroke="#3c3f41" stroke-width="2.2" stroke-linejoin="round"/><path d="M11.5 8.9 L16.3 12.8 L16.3 16.8 L14.3 19.1 L10 19.1 L6 14.3 L8.1 10.8 Z" fill="#72b7f4"/><path d="M8.7 11 L14.2 11 L16.3 12.8 L16.3 16.8 L15.2 18.2 Z" fill="#4b6da6"/><path d="M6 14.3 L8.1 10.8 L8.1 16.8 Z" fill="#5a8bd6"/></svg>

<svg style="left:131.8px;top:348.2px;" width="18" height="20" viewBox="0 0 18 20"><path d="M5.9 0 H12.4 V18 H0 V5.9 H5.9 Z" fill="#87939a"/><path d="M0.4 4.9 L4.9 0.4 V4.9 Z" fill="#909ca3"/><path d="M11.5 8.9 L16.3 12.8 L16.3 16.8 L14.3 19.1 L10 19.1 L6 14.3 L8.1 10.8 Z" fill="#3c3f41" stroke="#3c3f41" stroke-width="2.2" stroke-linejoin="round"/><path d="M11.5 8.9 L16.3 12.8 L16.3 16.8 L14.3 19.1 L10 19.1 L6 14.3 L8.1 10.8 Z" fill="#72b7f4"/><path d="M8.7 11 L14.2 11 L16.3 12.8 L16.3 16.8 L15.2 18.2 Z" fill="#4b6da6"/><path d="M6 14.3 L8.1 10.8 L8.1 16.8 Z" fill="#5a8bd6"/></svg>

<svg style="left:131.8px;top:373.2px;" width="18" height="20" viewBox="0 0 18 20"><path d="M5.9 0 H12.4 V18 H0 V5.9 H5.9 Z" fill="#87939a"/><path d="M0.4 4.9 L4.9 0.4 V4.9 Z" fill="#909ca3"/><path d="M11.5 8.9 L16.3 12.8 L16.3 16.8 L14.3 19.1 L10 19.1 L6 14.3 L8.1 10.8 Z" fill="#3c3f41" stroke="#3c3f41" stroke-width="2.2" stroke-linejoin="round"/><path d="M11.5 8.9 L16.3 12.8 L16.3 16.8 L14.3 19.1 L10 19.1 L6 14.3 L8.1 10.8 Z" fill="#72b7f4"/><path d="M8.7 11 L14.2 11 L16.3 12.8 L16.3 16.8 L15.2 18.2 Z" fill="#4b6da6"/><path d="M6 14.3 L8.1 10.8 L8.1 16.8 Z" fill="#5a8bd6"/></svg>

<svg style="left:131.8px;top:398.2px;" width="18" height="20" viewBox="0 0 18 20"><path d="M5.9 0 H12.4 V18 H0 V5.9 H5.9 Z" fill="#87939a"/><path d="M0.4 4.9 L4.9 0.4 V4.9 Z" fill="#909ca3"/><path d="M11.5 8.9 L16.3 12.8 L16.3 16.8 L14.3 19.1 L10 19.1 L6 14.3 L8.1 10.8 Z" fill="#3c3f41" stroke="#3c3f41" stroke-width="2.2" stroke-linejoin="round"/><path d="M11.5 8.9 L16.3 12.8 L16.3 16.8 L14.3 19.1 L10 19.1 L6 14.3 L8.1 10.8 Z" fill="#72b7f4"/><path d="M8.7 11 L14.2 11 L16.3 12.8 L16.3 16.8 L15.2 18.2 Z" fill="#4b6da6"/><path d="M6 14.3 L8.1 10.8 L8.1 16.8 Z" fill="#5a8bd6"/></svg>

<svg style="left:131.8px;top:423.2px;" width="18" height="20" viewBox="0 0 18 20"><path d="M5.9 0 H12.4 V18 H0 V5.9 H5.9 Z" fill="#87939a"/><path d="M0.4 4.9 L4.9 0.4 V4.9 Z" fill="#909ca3"/><path d="M11.5 8.9 L16.3 12.8 L16.3 16.8 L14.3 19.1 L10 19.1 L6 14.3 L8.1 10.8 Z" fill="#3c3f41" stroke="#3c3f41" stroke-width="2.2" stroke-linejoin="round"/><path d="M11.5 8.9 L16.3 12.8 L16.3 16.8 L14.3 19.1 L10 19.1 L6 14.3 L8.1 10.8 Z" fill="#72b7f4"/><path d="M8.7 11 L14.2 11 L16.3 12.8 L16.3 16.8 L15.2 18.2 Z" fill="#4b6da6"/><path d="M6 14.3 L8.1 10.8 L8.1 16.8 Z" fill="#5a8bd6"/></svg>

<svg style="left:131.8px;top:448.2px;" width="18" height="20" viewBox="0 0 18 20"><path d="M5.9 0 H12.4 V18 H0 V5.9 H5.9 Z" fill="#87939a"/><path d="M0.4 4.9 L4.9 0.4 V4.9 Z" fill="#909ca3"/><path d="M11.5 8.9 L16.3 12.8 L16.3 16.8 L14.3 19.1 L10 19.1 L6 14.3 L8.1 10.8 Z" fill="#3c3f41" stroke="#3c3f41" stroke-width="2.2" stroke-linejoin="round"/><path d="M11.5 8.9 L16.3 12.8 L16.3 16.8 L14.3 19.1 L10 19.1 L6 14.3 L8.1 10.8 Z" fill="#72b7f4"/><path d="M8.7 11 L14.2 11 L16.3 12.8 L16.3 16.8 L15.2 18.2 Z" fill="#4b6da6"/><path d="M6 14.3 L8.1 10.8 L8.1 16.8 Z" fill="#5a8bd6"/></svg>

<svg style="left:131.8px;top:473.2px;" width="18" height="20" viewBox="0 0 18 20"><path d="M5.9 0 H12.4 V18 H0 V5.9 H5.9 Z" fill="#87939a"/><path d="M0.4 4.9 L4.9 0.4 V4.9 Z" fill="#909ca3"/><path d="M11.5 8.9 L16.3 12.8 L16.3 16.8 L14.3 19.1 L10 19.1 L6 14.3 L8.1 10.8 Z" fill="#3c3f41" stroke="#3c3f41" stroke-width="2.2" stroke-linejoin="round"/><path d="M11.5 8.9 L16.3 12.8 L16.3 16.8 L14.3 19.1 L10 19.1 L6 14.3 L8.1 10.8 Z" fill="#72b7f4"/><path d="M8.7 11 L14.2 11 L16.3 12.8 L16.3 16.8 L15.2 18.2 Z" fill="#4b6da6"/><path d="M6 14.3 L8.1 10.8 L8.1 16.8 Z" fill="#5a8bd6"/></svg>

<svg style="left:131.8px;top:498.2px;" width="18" height="20" viewBox="0 0 18 20"><path d="M5.9 0 H12.4 V18 H0 V5.9 H5.9 Z" fill="#87939a"/><path d="M0.4 4.9 L4.9 0.4 V4.9 Z" fill="#909ca3"/><path d="M11.5 8.9 L16.3 12.8 L16.3 16.8 L14.3 19.1 L10 19.1 L6 14.3 L8.1 10.8 Z" fill="#3c3f41" stroke="#3c3f41" stroke-width="2.2" stroke-linejoin="round"/><path d="M11.5 8.9 L16.3 12.8 L16.3 16.8 L14.3 19.1 L10 19.1 L6 14.3 L8.1 10.8 Z" fill="#72b7f4"/><path d="M8.7 11 L14.2 11 L16.3 12.8 L16.3 16.8 L15.2 18.2 Z" fill="#4b6da6"/><path d="M6 14.3 L8.1 10.8 L8.1 16.8 Z" fill="#5a8bd6"/></svg>

<svg style="left:131.8px;top:523.2px;" width="18" height="20" viewBox="0 0 18 20"><path d="M5.9 0 H12.4 V18 H0 V5.9 H5.9 Z" fill="#87939a"/><path d="M0.4 4.9 L4.9 0.4 V4.9 Z" fill="#909ca3"/><path d="M11.5 8.9 L16.3 12.8 L16.3 16.8 L14.3 19.1 L10 19.1 L6 14.3 L8.1 10.8 Z" fill="#3c3f41" stroke="#3c3f41" stroke-width="2.2" stroke-linejoin="round"/><path d="M11.5 8.9 L16.3 12.8 L16.3 16.8 L14.3 19.1 L10 19.1 L6 14.3 L8.1 10.8 Z" fill="#72b7f4"/><path d="M8.7 11 L14.2 11 L16.3 12.8 L16.3 16.8 L15.2 18.2 Z" fill="#4b6da6"/><path d="M6 14.3 L8.1 10.8 L8.1 16.8 Z" fill="#5a8bd6"/></svg>

<svg style="left:131.8px;top:548.2px;" width="18" height="20" viewBox="0 0 18 20"><path d="M5.9 0 H12.4 V18 H0 V5.9 H5.9 Z" fill="#87939a"/><path d="M0.4 4.9 L4.9 0.4 V4.9 Z" fill="#909ca3"/><path d="M11.5 8.9 L16.3 12.8 L16.3 16.8 L14.3 19.1 L10 19.1 L6 14.3 L8.1 10.8 Z" fill="#3c3f41" stroke="#3c3f41" stroke-width="2.2" stroke-linejoin="round"/><path d="M11.5 8.9 L16.3 12.8 L16.3 16.8 L14.3 19.1 L10 19.1 L6 14.3 L8.1 10.8 Z" fill="#72b7f4"/><path d="M8.7 11 L14.2 11 L16.3 12.8 L16.3 16.8 L15.2 18.2 Z" fill="#4b6da6"/><path d="M6 14.3 L8.1 10.8 L8.1 16.8 Z" fill="#5a8bd6"/></svg>

<svg style="left:131.8px;top:573.2px;" width="18" height="20" viewBox="0 0 18 20"><path d="M5.9 0 H12.4 V18 H0 V5.9 H5.9 Z" fill="#87939a"/><path d="M0.4 4.9 L4.9 0.4 V4.9 Z" fill="#909ca3"/><path d="M11.5 8.9 L16.3 12.8 L16.3 16.8 L14.3 19.1 L10 19.1 L6 14.3 L8.1 10.8 Z" fill="#3c3f41" stroke="#3c3f41" stroke-width="2.2" stroke-linejoin="round"/><path d="M11.5 8.9 L16.3 12.8 L16.3 16.8 L14.3 19.1 L10 19.1 L6 14.3 L8.1 10.8 Z" fill="#72b7f4"/><path d="M8.7 11 L14.2 11 L16.3 12.8 L16.3 16.8 L15.2 18.2 Z" fill="#4b6da6"/><path d="M6 14.3 L8.1 10.8 L8.1 16.8 Z" fill="#5a8bd6"/></svg>

<svg style="left:131.8px;top:598.2px;" width="18" height="20" viewBox="0 0 18 20"><path d="M5.9 0 H12.4 V18 H0 V5.9 H5.9 Z" fill="#87939a"/><path d="M0.4 4.9 L4.9 0.4 V4.9 Z" fill="#909ca3"/><path d="M11.5 8.9 L16.3 12.8 L16.3 16.8 L14.3 19.1 L10 19.1 L6 14.3 L8.1 10.8 Z" fill="#3c3f41" stroke="#3c3f41" stroke-width="2.2" stroke-linejoin="round"/><path d="M11.5 8.9 L16.3 12.8 L16.3 16.8 L14.3 19.1 L10 19.1 L6 14.3 L8.1 10.8 Z" fill="#72b7f4"/><path d="M8.7 11 L14.2 11 L16.3 12.8 L16.3 16.8 L15.2 18.2 Z" fill="#4b6da6"/><path d="M6 14.3 L8.1 10.8 L8.1 16.8 Z" fill="#5a8bd6"/></svg>
<svg style="left:81.5px;top:628.1px;" width="13" height="9" viewBox="0 0 13 9"><path d="M1 1 L6.4 6.6 L11.8 1" fill="none" stroke="#adadad" stroke-width="1.5"/></svg>
<svg style="left:106px;top:624.2px;" width="18" height="14" viewBox="0 0 18 14"><path d="M0 0 H7.6 L10.8 3 H18 V14 H0 Z" fill="#87939a"/></svg>

<svg style="left:131.8px;top:648.2px;" width="18" height="20" viewBox="0 0 18 20"><path d="M5.9 0 H12.4 V18 H0 V5.9 H5.9 Z" fill="#87939a"/><path d="M0.4 4.9 L4.9 0.4 V4.9 Z" fill="#909ca3"/><path d="M9 7.2 C6.8 7.2 7.7 9.6 7.4 11.2 C7.2 12.3 6.4 12.7 5.4 12.85 C6.4 13 7.2 13.4 7.4 14.5 C7.7 16.1 6.8 18.5 9 18.5" fill="none" stroke="#3c3f41" stroke-width="3.6" stroke-linecap="square"/><path d="M12.4 7.2 C14.6 7.2 13.7 9.6 14 11.2 C14.2 12.3 15 12.7 16 12.85 C15 13 14.2 13.4 14 14.5 C13.7 16.1 14.6 18.5 12.4 18.5" fill="none" stroke="#3c3f41" stroke-width="3.6" stroke-linecap="square"/><ellipse cx="10.7" cy="12.85" rx="2.9" ry="5.4" fill="#3c3f41"/><path d="M9 7.2 C6.8 7.2 7.7 9.6 7.4 11.2 C7.2 12.3 6.4 12.7 5.4 12.85 C6.4 13 7.2 13.4 7.4 14.5 C7.7 16.1 6.8 18.5 9 18.5" fill="none" stroke="#b2bcc3" stroke-width="1.35"/><path d="M12.4 7.2 C14.6 7.2 13.7 9.6 14 11.2 C14.2 12.3 15 12.7 16 12.85 C15 13 14.2 13.4 14 14.5 C13.7 16.1 14.6 18.5 12.4 18.5" fill="none" stroke="#b2bcc3" stroke-width="1.35"/><ellipse cx="10.7" cy="12.85" rx="1.7" ry="4.2" fill="#96a2a9"/></svg>

<svg style="left:131.8px;top:673.2px;" width="18" height="20" viewBox="0 0 18 20"><path d="M5.9 0 H12.4 V18 H0 V5.9 H5.9 Z" fill="#87939a"/><path d="M0.4 4.9 L4.9 0.4 V4.9 Z" fill="#909ca3"/><path d="M9 7.2 C6.8 7.2 7.7 9.6 7.4 11.2 C7.2 12.3 6.4 12.7 5.4 12.85 C6.4 13 7.2 13.4 7.4 14.5 C7.7 16.1 6.8 18.5 9 18.5" fill="none" stroke="#3c3f41" stroke-width="3.6" stroke-linecap="square"/><path d="M12.4 7.2 C14.6 7.2 13.7 9.6 14 11.2 C14.2 12.3 15 12.7 16 12.85 C15 13 14.2 13.4 14 14.5 C13.7 16.1 14.6 18.5 12.4 18.5" fill="none" stroke="#3c3f41" stroke-width="3.6" stroke-linecap="square"/><ellipse cx="10.7" cy="12.85" rx="2.9" ry="5.4" fill="#3c3f41"/><path d="M9 7.2 C6.8 7.2 7.7 9.6 7.4 11.2 C7.2 12.3 6.4 12.7 5.4 12.85 C6.4 13 7.2 13.4 7.4 14.5 C7.7 16.1 6.8 18.5 9 18.5" fill="none" stroke="#b2bcc3" stroke-width="1.35"/><path d="M12.4 7.2 C14.6 7.2 13.7 9.6 14 11.2 C14.2 12.3 15 12.7 16 12.85 C15 13 14.2 13.4 14 14.5 C13.7 16.1 14.6 18.5 12.4 18.5" fill="none" stroke="#b2bcc3" stroke-width="1.35"/><ellipse cx="10.7" cy="12.85" rx="1.7" ry="4.2" fill="#96a2a9"/></svg>

<svg style="left:131.8px;top:698.2px;" width="18" height="20" viewBox="0 0 18 20"><path d="M5.9 0 H12.4 V18 H0 V5.9 H5.9 Z" fill="#87939a"/><path d="M0.4 4.9 L4.9 0.4 V4.9 Z" fill="#909ca3"/><path d="M9 7.2 C6.8 7.2 7.7 9.6 7.4 11.2 C7.2 12.3 6.4 12.7 5.4 12.85 C6.4 13 7.2 13.4 7.4 14.5 C7.7 16.1 6.8 18.5 9 18.5" fill="none" stroke="#0d293e" stroke-width="3.6" stroke-linecap="square"/><path d="M12.4 7.2 C14.6 7.2 13.7 9.6 14 11.2 C14.2 12.3 15 12.7 16 12.85 C15 13 14.2 13.4 14 14.5 C13.7 16.1 14.6 18.5 12.4 18.5" fill="none" stroke="#0d293e" stroke-width="3.6" stroke-linecap="square"/><ellipse cx="10.7" cy="12.85" rx="2.9" ry="5.4" fill="#0d293e"/><path d="M9 7.2 C6.8 7.2 7.7 9.6 7.4 11.2 C7.2 12.3 6.4 12.7 5.4 12.85 C6.4 13 7.2 13.4 7.4 14.5 C7.7 16.1 6.8 18.5 9 18.5" fill="none" stroke="#b2bcc3" stroke-width="1.35"/><path d="M12.4 7.2 C14.6 7.2 13.7 9.6 14 11.2 C14.2 12.3 15 12.7 16 12.85 C15 13 14.2 13.4 14 14.5 C13.7 16.1 14.6 18.5 12.4 18.5" fill="none" stroke="#b2bcc3" stroke-width="1.35"/><ellipse cx="10.7" cy="12.85" rx="1.7" ry="4.2" fill="#96a2a9"/></svg>

<svg style="left:131.8px;top:723.2px;" width="18" height="20" viewBox="0 0 18 20"><path d="M5.9 0 H12.4 V18 H0 V5.9 H5.9 Z" fill="#87939a"/><path d="M0.4 4.9 L4.9 0.4 V4.9 Z" fill="#909ca3"/><path d="M9 7.2 C6.8 7.2 7.7 9.6 7.4 11.2 C7.2 12.3 6.4 12.7 5.4 12.85 C6.4 13 7.2 13.4 7.4 14.5 C7.7 16.1 6.8 18.5 9 18.5" fill="none" stroke="#3c3f41" stroke-width="3.6" stroke-linecap="square"/><path d="M12.4 7.2 C14.6 7.2 13.7 9.6 14 11.2 C14.2 12.3 15 12.7 16 12.85 C15 13 14.2 13.4 14 14.5 C13.7 16.1 14.6 18.5 12.4 18.5" fill="none" stroke="#3c3f41" stroke-width="3.6" stroke-linecap="square"/><ellipse cx="10.7" cy="12.85" rx="2.9" ry="5.4" fill="#3c3f41"/><path d="M9 7.2 C6.8 7.2 7.7 9.6 7.4 11.2 C7.2 12.3 6.4 12.7 5.4 12.85 C6.4 13 7.2 13.4 7.4 14.5 C7.7 16.1 6.8 18.5 9 18.5" fill="none" stroke="#b2bcc3" stroke-width="1.35"/><path d="M12.4 7.2 C14.6 7.2 13.7 9.6 14 11.2 C14.2 12.3 15 12.7 16 12.85 C15 13 14.2 13.4 14 14.5 C13.7 16.1 14.6 18.5 12.4 18.5" fill="none" stroke="#b2bcc3" stroke-width="1.35"/><ellipse cx="10.7" cy="12.85" rx="1.7" ry="4.2" fill="#96a2a9"/></svg>

<svg style="left:131.8px;top:748.2px;" width="18" height="20" viewBox="0 0 18 20"><path d="M5.9 0 H12.4 V18 H0 V5.9 H5.9 Z" fill="#87939a"/><path d="M0.4 4.9 L4.9 0.4 V4.9 Z" fill="#909ca3"/><path d="M9 7.2 C6.8 7.2 7.7 9.6 7.4 11.2 C7.2 12.3 6.4 12.7 5.4 12.85 C6.4 13 7.2 13.4 7.4 14.5 C7.7 16.1 6.8 18.5 9 18.5" fill="none" stroke="#3c3f41" stroke-width="3.6" stroke-linecap="square"/><path d="M12.4 7.2 C14.6 7.2 13.7 9.6 14 11.2 C14.2 12.3 15 12.7 16 12.85 C15 13 14.2 13.4 14 14.5 C13.7 16.1 14.6 18.5 12.4 18.5" fill="none" stroke="#3c3f41" stroke-width="3.6" stroke-linecap="square"/><ellipse cx="10.7" cy="12.85" rx="2.9" ry="5.4" fill="#3c3f41"/><path d="M9 7.2 C6.8 7.2 7.7 9.6 7.4 11.2 C7.2 12.3 6.4 12.7 5.4 12.85 C6.4 13 7.2 13.4 7.4 14.5 C7.7 16.1 6.8 18.5 9 18.5" fill="none" stroke="#b2bcc3" stroke-width="1.35"/><path d="M12.4 7.2 C14.6 7.2 13.7 9.6 14 11.2 C14.2 12.3 15 12.7 16 12.85 C15 13 14.2 13.4 14 14.5 C13.7 16.1 14.6 18.5 12.4 18.5" fill="none" stroke="#b2bcc3" stroke-width="1.35"/><ellipse cx="10.7" cy="12.85" rx="1.7" ry="4.2" fill="#96a2a9"/></svg>

<svg style="left:131.8px;top:773.2px;" width="18" height="20" viewBox="0 0 18 20"><path d="M5.9 0 H12.4 V18 H0 V5.9 H5.9 Z" fill="#87939a"/><path d="M0.4 4.9 L4.9 0.4 V4.9 Z" fill="#909ca3"/><path d="M9 7.2 C6.8 7.2 7.7 9.6 7.4 11.2 C7.2 12.3 6.4 12.7 5.4 12.85 C6.4 13 7.2 13.4 7.4 14.5 C7.7 16.1 6.8 18.5 9 18.5" fill="none" stroke="#3c3f41" stroke-width="3.6" stroke-linecap="square"/><path d="M12.4 7.2 C14.6 7.2 13.7 9.6 14 11.2 C14.2 12.3 15 12.7 16 12.85 C15 13 14.2 13.4 14 14.5 C13.7 16.1 14.6 18.5 12.4 18.5" fill="none" stroke="#3c3f41" stroke-width="3.6" stroke-linecap="square"/><ellipse cx="10.7" cy="12.85" rx="2.9" ry="5.4" fill="#3c3f41"/><path d="M9 7.2 C6.8 7.2 7.7 9.6 7.4 11.2 C7.2 12.3 6.4 12.7 5.4 12.85 C6.4 13 7.2 13.4 7.4 14.5 C7.7 16.1 6.8 18.5 9 18.5" fill="none" stroke="#b2bcc3" stroke-width="1.35"/><path d="M12.4 7.2 C14.6 7.2 13.7 9.6 14 11.2 C14.2 12.3 15 12.7 16 12.85 C15 13 14.2 13.4 14 14.5 C13.7 16.1 14.6 18.5 12.4 18.5" fill="none" stroke="#b2bcc3" stroke-width="1.35"/><ellipse cx="10.7" cy="12.85" rx="1.7" ry="4.2" fill="#96a2a9"/></svg>

<svg style="left:131.8px;top:798.2px;" width="18" height="20" viewBox="0 0 18 20"><path d="M5.9 0 H12.4 V18 H0 V5.9 H5.9 Z" fill="#87939a"/><path d="M0.4 4.9 L4.9 0.4 V4.9 Z" fill="#909ca3"/><path d="M9 7.2 C6.8 7.2 7.7 9.6 7.4 11.2 C7.2 12.3 6.4 12.7 5.4 12.85 C6.4 13 7.2 13.4 7.4 14.5 C7.7 16.1 6.8 18.5 9 18.5" fill="none" stroke="#3c3f41" stroke-width="3.6" stroke-linecap="square"/><path d="M12.4 7.2 C14.6 7.2 13.7 9.6 14 11.2 C14.2 12.3 15 12.7 16 12.85 C15 13 14.2 13.4 14 14.5 C13.7 16.1 14.6 18.5 12.4 18.5" fill="none" stroke="#3c3f41" stroke-width="3.6" stroke-linecap="square"/><ellipse cx="10.7" cy="12.85" rx="2.9" ry="5.4" fill="#3c3f41"/><path d="M9 7.2 C6.8 7.2 7.7 9.6 7.4 11.2 C7.2 12.3 6.4 12.7 5.4 12.85 C6.4 13 7.2 13.4 7.4 14.5 C7.7 16.1 6.8 18.5 9 18.5" fill="none" stroke="#b2bcc3" stroke-width="1.35"/><path d="M12.4 7.2 C14.6 7.2 13.7 9.6 14 11.2 C14.2 12.3 15 12.7 16 12.85 C15 13 14.2 13.4 14 14.5 C13.7 16.1 14.6 18.5 12.4 18.5" fill="none" stroke="#b2bcc3" stroke-width="1.35"/><ellipse cx="10.7" cy="12.85" rx="1.7" ry="4.2" fill="#96a2a9"/></svg>

<svg style="left:131.8px;top:823.2px;" width="18" height="20" viewBox="0 0 18 20"><path d="M5.9 0 H12.4 V18 H0 V5.9 H5.9 Z" fill="#87939a"/><path d="M0.4 4.9 L4.9 0.4 V4.9 Z" fill="#909ca3"/><path d="M9 7.2 C6.8 7.2 7.7 9.6 7.4 11.2 C7.2 12.3 6.4 12.7 5.4 12.85 C6.4 13 7.2 13.4 7.4 14.5 C7.7 16.1 6.8 18.5 9 18.5" fill="none" stroke="#3c3f41" stroke-width="3.6" stroke-linecap="square"/><path d="M12.4 7.2 C14.6 7.2 13.7 9.6 14 11.2 C14.2 12.3 15 12.7 16 12.85 C15 13 14.2 13.4 14 14.5 C13.7 16.1 14.6 18.5 12.4 18.5" fill="none" stroke="#3c3f41" stroke-width="3.6" stroke-linecap="square"/><ellipse cx="10.7" cy="12.85" rx="2.9" ry="5.4" fill="#3c3f41"/><path d="M9 7.2 C6.8 7.2 7.7 9.6 7.4 11.2 C7.2 12.3 6.4 12.7 5.4 12.85 C6.4 13 7.2 13.4 7.4 14.5 C7.7 16.1 6.8 18.5 9 18.5" fill="none" stroke="#b2bcc3" stroke-width="1.35"/><path d="M12.4 7.2 C14.6 7.2 13.7 9.6 14 11.2 C14.2 12.3 15 12.7 16 12.85 C15 13 14.2 13.4 14 14.5 C13.7 16.1 14.6 18.5 12.4 18.5" fill="none" stroke="#b2bcc3" stroke-width="1.35"/><ellipse cx="10.7" cy="12.85" rx="1.7" ry="4.2" fill="#96a2a9"/></svg>
<svg style="left:81.5px;top:853.1px;" width="13" height="9" viewBox="0 0 13 9"><path d="M1 1 L6.4 6.6 L11.8 1" fill="none" stroke="#adadad" stroke-width="1.5"/></svg>
<svg style="left:106px;top:849.2px;" width="18" height="14" viewBox="0 0 18 14"><path d="M0 0 H7.6 L10.8 3 H18 V14 H0 Z" fill="#87939a"/></svg>

<svg style="left:131.8px;top:873.2px;" width="18" height="20" viewBox="0 0 18 20"><path d="M5.9 0 H12.4 V18 H0 V5.9 H5.9 Z" fill="#87939a"/><path d="M0.4 4.9 L4.9 0.4 V4.9 Z" fill="#909ca3"/><path d="M11.5 8.9 L16.3 12.8 L16.3 16.8 L14.3 19.1 L10 19.1 L6 14.3 L8.1 10.8 Z" fill="#3c3f41" stroke="#3c3f41" stroke-width="2.2" stroke-linejoin="round"/><path d="M11.5 8.9 L16.3 12.8 L16.3 16.8 L14.3 19.1 L10 19.1 L6 14.3 L8.1 10.8 Z" fill="#72b7f4"/><path d="M8.7 11 L14.2 11 L16.3 12.8 L16.3 16.8 L15.2 18.2 Z" fill="#4b6da6"/><path d="M6 14.3 L8.1 10.8 L8.1 16.8 Z" fill="#5a8bd6"/></svg>

<svg style="left:131.8px;top:898.2px;" width="18" height="20" viewBox="0 0 18 20"><path d="M5.9 0 H12.4 V18 H0 V5.9 H5.9 Z" fill="#87939a"/><path d="M0.4 4.9 L4.9 0.4 V4.9 Z" fill="#909ca3"/><path d="M11.5 8.9 L16.3 12.8 L16.3 16.8 L14.3 19.1 L10 19.1 L6 14.3 L8.1 10.8 Z" fill="#3c3f41" stroke="#3c3f41" stroke-width="2.2" stroke-linejoin="round"/><path d="M11.5 8.9 L16.3 12.8 L16.3 16.8 L14.3 19.1 L10 19.1 L6 14.3 L8.1 10.8 Z" fill="#72b7f4"/><path d="M8.7 11 L14.2 11 L16.3 12.8 L16.3 16.8 L15.2 18.2 Z" fill="#4b6da6"/><path d="M6 14.3 L8.1 10.8 L8.1 16.8 Z" fill="#5a8bd6"/></svg>

<svg style="left:131.8px;top:923.2px;" width="18" height="20" viewBox="0 0 18 20"><path d="M5.9 0 H12.4 V18 H0 V5.9 H5.9 Z" fill="#87939a"/><path d="M0.4 4.9 L4.9 0.4 V4.9 Z" fill="#909ca3"/><path d="M11.5 8.9 L16.3 12.8 L16.3 16.8 L14.3 19.1 L10 19.1 L6 14.3 L8.1 10.8 Z" fill="#3c3f41" stroke="#3c3f41" stroke-width="2.2" stroke-linejoin="round"/><path d="M11.5 8.9 L16.3 12.8 L16.3 16.8 L14.3 19.1 L10 19.1 L6 14.3 L8.1 10.8 Z" fill="#72b7f4"/><path d="M8.7 11 L14.2 11 L16.3 12.8 L16.3 16.8 L15.2 18.2 Z" fill="#4b6da6"/><path d="M6 14.3 L8.1 10.8 L8.1 16.8 Z" fill="#5a8bd6"/></svg>

<svg style="left:131.8px;top:948.2px" width="18" height="10.8" viewBox="0 0 18 10.8"><path d="M5.9 0 H12.4 V18 H0 V5.9 H5.9 Z" fill="#87939a"/><path d="M0.4 4.9 L4.9 0.4 V4.9 Z" fill="#909ca3"/><path d="M11.5 8.9 L16.3 12.8 L16.3 16.8 L14.3 19.1 L10 19.1 L6 14.3 L8.1 10.8 Z" fill="#3c3f41" stroke="#3c3f41" stroke-width="2.2" stroke-linejoin="round"/><path d="M11.5 8.9 L16.3 12.8 L16.3 16.8 L14.3 19.1 L10 19.1 L6 14.3 L8.1 10.8 Z" fill="#72b7f4"/><path d="M8.7 11 L14.2 11 L16.3 12.8 L16.3 16.8 L15.2 18.2 Z" fill="#4b6da6"/><path d="M6 14.3 L8.1 10.8 L8.1 16.8 Z" fill="#5a8bd6"/></svg>
<svg style="left:296px;top:30px" width="152" height="23" viewBox="296 30 152 23"><path d="M299.4 32.2 L304.2 41.4 L299.4 50.8" fill="none" stroke="#6e7173" stroke-width="1.1"/><path d="M341.6 32.2 L346.40000000000003 41.4 L341.6 50.8" fill="none" stroke="#6e7173" stroke-width="1.1"/><path d="M439.5 32.2 L444.3 41.4 L439.5 50.8" fill="none" stroke="#6e7173" stroke-width="1.1"/></svg>
<svg style="left:454px;top:32px;" width="18" height="20" viewBox="0 0 18 20"><path d="M5.9 0 H12.4 V18 H0 V5.9 H5.9 Z" fill="#87939a"/><path d="M0.4 4.9 L4.9 0.4 V4.9 Z" fill="#909ca3"/><path d="M9 7.2 C6.8 7.2 7.7 9.6 7.4 11.2 C7.2 12.3 6.4 12.7 5.4 12.85 C6.4 13 7.2 13.4 7.4 14.5 C7.7 16.1 6.8 18.5 9 18.5" fill="none" stroke="#3c3f41" stroke-width="3.6" stroke-linecap="square"/><path d="M12.4 7.2 C14.6 7.2 13.7 9.6 14 11.2 C14.2 12.3 15 12.7 16 12.85 C15 13 14.2 13.4 14 14.5 C13.7 16.1 14.6 18.5 12.4 18.5" fill="none" stroke="#3c3f41" stroke-width="3.6" stroke-linecap="square"/><ellipse cx="10.7" cy="12.85" rx="2.9" ry="5.4" fill="#3c3f41"/><path d="M9 7.2 C6.8 7.2 7.7 9.6 7.4 11.2 C7.2 12.3 6.4 12.7 5.4 12.85 C6.4 13 7.2 13.4 7.4 14.5 C7.7 16.1 6.8 18.5 9 18.5" fill="none" stroke="#b2bcc3" stroke-width="1.35"/><path d="M12.4 7.2 C14.6 7.2 13.7 9.6 14 11.2 C14.2 12.3 15 12.7 16 12.85 C15 13 14.2 13.4 14 14.5 C13.7 16.1 14.6 18.5 12.4 18.5" fill="none" stroke="#b2bcc3" stroke-width="1.35"/><ellipse cx="10.7" cy="12.85" rx="1.7" ry="4.2" fill="#96a2a9"/></svg>
<div style="left:798px;top:28px;width:222px;height:27px;border:1px solid #646769;border-radius:4px;box-sizing:border-box;background:none"></div>
<div style="left:1042px;top:28px;width:148.5px;height:27px;border:1px solid #646769;border-radius:4px;box-sizing:border-box;background:none"></div>
<svg style="left:810px;top:28px" width="372" height="28" viewBox="810 28 372 28"><rect x="814.6" y="34.6" width="10.4" height="15.4" rx="1.8" fill="none" stroke="#14b0f5" stroke-width="1.7"/><rect x="814.6" y="46.6" width="10.4" height="3.4" rx="1.2" fill="#14b0f5"/><path d="M996 39.5 h11.3 l-5.65 6.7 Z" fill="#9d9fa1"/><rect x="1029" y="30.5" width="1" height="22.5" fill="#555759"/><g transform="translate(1056.5 33) scale(0.98)"><path d="M8.6 0 L13.4 0 L3.6 9.8 L1.2 7.4 Z" fill="#54c5f8"/><path d="M8.6 7.6 L13.4 7.6 L8.4 12.6 L6 10.2 Z" fill="#54c5f8"/><path d="M6 10.2 L8.4 12.6 L13.4 17.4 L8.6 17.4 L3.6 12.6 Z" fill="#01579b"/><path d="M3.6 12.6 L6 10.2 L8.4 12.6 L6 15 Z" fill="#29b6f6"/></g><circle cx="1071.8" cy="49.6" r="3.5" fill="#3c3f41"/><circle cx="1071.8" cy="49.6" r="2.5" fill="#0fe00f"/><path d="M1166.5 39.5 h11.3 l-5.65 6.7 Z" fill="#9d9fa1"/></svg>
<svg style="left:1200px;top:28px" width="648" height="28" viewBox="1200 28 648 28"><path d="M1207.9 34.6 L1220.3 42 L1207.9 49.3 Z" fill="#499c54"/><circle cx="1220.8" cy="49.8" r="3.7" fill="#3c3f41"/><circle cx="1220.8" cy="49.8" r="2.7" fill="#0fe00f"/><g transform="translate(1239 33.4)" fill="#5a5b5c" stroke="none"><path d="M7.9 3 C10.6 3 12.8 5.2 12.8 8 V13 C12.8 15.8 10.6 17.8 7.9 17.8 C5.2 17.8 3 15.8 3 13 V8 C3 5.2 5.2 3 7.9 3 Z"/><path d="M4.4 0.6 L7.2 3.9 M11.4 0.6 L8.6 3.9" stroke="#5a5b5c" stroke-width="1.7" fill="none"/><path d="M0.2 6.2 H3.6 M0.2 10.3 H3.6 M0.2 14.4 H3.6 M12.2 6.2 H15.6 M12.2 10.3 H15.6 M12.2 14.4 H15.6" stroke="#5a5b5c" stroke-width="1.7" fill="none"/><rect x="5.9" y="7.9" width="4" height="1.2" fill="#3c3f41"/><rect x="5.9" y="11.5" width="4" height="1.2" fill="#3c3f41"/></g><path d="M1272.2 36.2 L1278.6 34.2 L1285 36.2 L1285 42 L1282 42 L1282 48 L1278.6 49.6 C1274.6 48 1272.2 44.8 1272.2 41 Z" fill="#5a5b5c"/><path d="M1279 37.4 L1282.3 38.4 L1282.3 41.4 L1281.2 41.4 L1281.2 47 L1279 48 Z" fill="#3c3f41"/><path d="M1282.1 41.2 L1291 46.6 L1282.1 52 Z" fill="#5a5b5c"/><path d="M1315.6 32.2 L1308.8 44.3 L1313.9 44.3 L1313.2 51.2 L1320 39.2 L1315.2 39.2 Z" fill="#f4af2e"/><rect x="1343" y="33.9" width="9.2" height="16.2" fill="none" stroke="#a7a9ab" stroke-width="2"/><rect x="1346.4" y="40" width="10" height="12.4" fill="#3c3f41"/><g transform="translate(1346.6 40.9) scale(0.6)"><path d="M8.6 0 L13.4 0 L3.6 9.8 L1.2 7.4 Z" fill="#54c5f8"/><path d="M8.6 7.6 L13.4 7.6 L8.4 12.6 L6 10.2 Z" fill="#54c5f8"/><path d="M6 10.2 L8.4 12.6 L13.4 17.4 L8.6 17.4 L3.6 12.6 Z" fill="#01579b"/><path d="M3.6 12.6 L6 10.2 L8.4 12.6 L6 15 Z" fill="#29b6f6"/></g><g transform="translate(1375 33.4)" fill="#499c54" stroke="none"><path d="M7.9 3 C10.6 3 12.8 5.2 12.8 8 V13 C12.8 15.8 10.6 17.8 7.9 17.8 C5.2 17.8 3 15.8 3 13 V8 C3 5.2 5.2 3 7.9 3 Z"/><path d="M4.4 0.6 L7.2 3.9 M11.4 0.6 L8.6 3.9" stroke="#499c54" stroke-width="1.7" fill="none"/><path d="M0.2 6.2 H3.6 M0.2 10.3 H3.6 M0.2 14.4 H3.6 M12.2 6.2 H15.6 M12.2 10.3 H15.6 M12.2 14.4 H15.6" stroke="#499c54" stroke-width="1.7" fill="none"/><rect x="5.9" y="7.9" width="4" height="1.2" fill="#3c3f41"/><rect x="5.9" y="11.5" width="4" height="1.2" fill="#3c3f41"/></g><rect x="1383.2" y="42" width="11" height="11" fill="#3c3f41"/><path d="M1385.4 42.8 H1393.2 V50.6 L1390.4 47.8 L1386.4 51.9 L1384.2 49.7 L1388.3 45.6 Z" fill="#c4c4c4"/><rect x="1411" y="35.9" width="12.4" height="12.3" fill="#cc5552"/><rect x="1438" y="30.3" width="1" height="22.5" fill="#555759"/><path d="M1509.6 35.3 L1500.5 44.4" stroke="#3592c4" stroke-width="2.6" fill="none"/><path d="M1496.6 40 L1496.6 48.2 L1504.9 48.2 Z" fill="#3592c4"/><path d="M1530.2 42.6 L1534.7 47 L1545.6 35.6" stroke="#499c54" stroke-width="2.7" fill="none"/><path d="M1564.4 48.4 L1573.3 39.4" stroke="#499c54" stroke-width="2.6" fill="none"/><path d="M1568.8 35.5 L1577.1 35.5 L1577.1 43.9 Z" fill="#499c54"/><circle cx="1604.9" cy="41.9" r="7.9" fill="none" stroke="#afb1b3" stroke-width="2.2"/><path d="M1604.9 37.4 V42.2 L1608.4 44.6" fill="none" stroke="#afb1b3" stroke-width="1.9"/><path d="M1631.6 38.3 L1636.7 33.6 L1636.7 43 Z" fill="#afb1b3"/><path d="M1636.2 38.3 H1642.2 A4.55 4.55 0 0 1 1642.2 47.4 H1636.6" fill="none" stroke="#afb1b3" stroke-width="2.3"/><rect x="1660" y="30.3" width="1" height="22.5" fill="#555759"/><path d="M1684 49 H1679.2 A1.4 1.4 0 0 1 1677.8 47.6 V36.8 A1.4 1.4 0 0 1 1679.2 35.4 H1684.6 A1.4 1.4 0 0 1 1686 36.8 V43.6" fill="none" stroke="#afb1b3" stroke-width="1.9"/><rect x="1678" y="46.2" width="4" height="2.8" fill="#afb1b3"/><path d="M1681.4 51.2 A5.3 5.6 0 0 1 1692 51.2 Z" fill="#3ddc84"/><path d="M1683.6 44.6 L1684.8 46.6 M1689.8 44.6 L1688.6 46.6" stroke="#3ddc84" stroke-width="0.9"/><path d="M1713.8 33.8 L1719.6 36.6 L1713.8 39.4 L1708 36.6 Z" fill="#b5b7b9"/><path d="M1708 37.6 L1713.3 40.2 L1713.3 46.8 L1708 44.2 Z" fill="#9a9c9e"/><path d="M1719.6 37.6 L1714.3 40.2 L1714.3 46.8 L1719.6 44.2 Z" fill="#85878a"/><rect x="1716.6" y="40" width="11" height="13" fill="#3c3f41" opacity="0.0"/><path d="M1720.8 40.8 H1723.3 V46.9 H1726.9 L1722.05 51.9 L1717.2 46.9 H1720.8 Z" fill="#3592c4" stroke="#3c3f41" stroke-width="0.6"/><rect x="1738" y="30.3" width="1" height="22.5" fill="#555759"/><circle cx="1759.4" cy="40.4" r="6.1" fill="none" stroke="#afb1b3" stroke-width="2.3"/><path d="M1763.6 45 L1769.4 50.6" stroke="#afb1b3" stroke-width="2.5" fill="none"/><path fill-rule="evenodd" fill="#afb1b3" d="M1796.74 36.15 L1796.53 34.06 L1793.27 34.06 L1793.06 36.15 L1790.66 37.53 L1788.75 36.67 L1787.13 39.49 L1788.82 40.72 L1788.82 43.48 L1787.13 44.71 L1788.75 47.53 L1790.66 46.67 L1793.06 48.05 L1793.27 50.14 L1796.53 50.14 L1796.74 48.05 L1799.14 46.67 L1801.05 47.53 L1802.67 44.71 L1800.98 43.48 L1800.98 40.72 L1802.67 39.49 L1801.05 36.67 L1799.14 37.53 Z M1792.20 42.10 a2.7 2.7 0 1 0 5.4 0 a2.7 2.7 0 1 0 -5.4 0 Z"/><circle cx="1794.9" cy="42.1" r="5.07" fill="none" stroke="#afb1b3" stroke-width="2.53"/><rect x="1819" y="32" width="20" height="20" fill="#cfcfcf"/><circle cx="1829" cy="39.4" r="4" fill="#ffffff"/><path d="M1823 52 V48 A3 3 0 0 1 1826 45 H1832 A3 3 0 0 1 1835 48 V52 Z" fill="#ffffff"/></svg>
<svg style="left:38px;top:64px" width="366" height="28" viewBox="38 64 366 28"><rect x="40" y="69" width="18" height="17" fill="#68747a"/><rect x="40" y="69" width="18" height="3" fill="#8b979e"/><rect x="41.8" y="73.4" width="14.4" height="10.8" fill="#3c3f41"/><rect x="42.8" y="74.4" width="12.4" height="8.8" fill="#3e86a0"/><path d="M133.4 75 h11.3 l-5.65 6.7 Z" fill="#a9abad"/><circle cx="247" cy="77.9" r="7.9" fill="none" stroke="#afb1b3" stroke-width="2.1"/><path d="M247 70.5 V75 M247 80.8 V85.3 M239.6 77.9 H244.1 M249.9 77.9 H254.4" stroke="#afb1b3" stroke-width="2" fill="none"/><rect x="273.3" y="69" width="15.4" height="2.7" fill="#afb1b3"/><rect x="273.3" y="84.2" width="15.4" height="2.7" fill="#afb1b3"/><path d="M276.8 76.8 L281 73.3 L285.2 76.8 Z M276.8 79.2 L281 82.7 L285.2 79.2 Z" fill="#afb1b3"/><rect x="307.4" y="76.6" width="15.4" height="2.7" fill="#afb1b3"/><path d="M310.9 70.6 L315.1 74.4 L319.3 70.6 Z M310.9 85.9 L315.1 82.1 L319.3 85.9 Z" fill="#afb1b3"/><rect x="336" y="66" width="1" height="22.5" fill="#595a55"/><path fill-rule="evenodd" fill="#afb1b3" d="M360.64 71.95 L360.43 69.86 L357.17 69.86 L356.96 71.95 L354.56 73.33 L352.65 72.47 L351.03 75.29 L352.72 76.52 L352.72 79.28 L351.03 80.51 L352.65 83.33 L354.56 82.47 L356.96 83.85 L357.17 85.94 L360.43 85.94 L360.64 83.85 L363.04 82.47 L364.95 83.33 L366.57 80.51 L364.88 79.28 L364.88 76.52 L366.57 75.29 L364.95 72.47 L363.04 73.33 Z M356.10 77.90 a2.7 2.7 0 1 0 5.4 0 a2.7 2.7 0 1 0 -5.4 0 Z"/><circle cx="358.8" cy="77.9" r="5.07" fill="none" stroke="#afb1b3" stroke-width="2.53"/><rect x="385.5" y="76.6" width="15.2" height="2.7" fill="#afb1b3"/></svg>
<svg style="left:423.3px;top:69px;" width="18" height="20" viewBox="0 0 18 20"><path d="M5.9 0 H12.4 V18 H0 V5.9 H5.9 Z" fill="#87939a"/><path d="M0.4 4.9 L4.9 0.4 V4.9 Z" fill="#909ca3"/><path d="M9 7.2 C6.8 7.2 7.7 9.6 7.4 11.2 C7.2 12.3 6.4 12.7 5.4 12.85 C6.4 13 7.2 13.4 7.4 14.5 C7.7 16.1 6.8 18.5 9 18.5" fill="none" stroke="#4e5254" stroke-width="3.6" stroke-linecap="square"/><path d="M12.4 7.2 C14.6 7.2 13.7 9.6 14 11.2 C14.2 12.3 15 12.7 16 12.85 C15 13 14.2 13.4 14 14.5 C13.7 16.1 14.6 18.5 12.4 18.5" fill="none" stroke="#4e5254" stroke-width="3.6" stroke-linecap="square"/><ellipse cx="10.7" cy="12.85" rx="2.9" ry="5.4" fill="#4e5254"/><path d="M9 7.2 C6.8 7.2 7.7 9.6 7.4 11.2 C7.2 12.3 6.4 12.7 5.4 12.85 C6.4 13 7.2 13.4 7.4 14.5 C7.7 16.1 6.8 18.5 9 18.5" fill="none" stroke="#b2bcc3" stroke-width="1.35"/><path d="M12.4 7.2 C14.6 7.2 13.7 9.6 14 11.2 C14.2 12.3 15 12.7 16 12.85 C15 13 14.2 13.4 14 14.5 C13.7 16.1 14.6 18.5 12.4 18.5" fill="none" stroke="#b2bcc3" stroke-width="1.35"/><ellipse cx="10.7" cy="12.85" rx="1.7" ry="4.2" fill="#96a2a9"/></svg>
<svg style="left:508px;top:71px" width="13" height="14" viewBox="508 71 13 14"><path d="M510 73.5 L518.6 82.1 M518.6 73.5 L510 82.1" stroke="#8a8d8f" stroke-width="1.1" fill="none"/></svg>
<svg style="left:2px;top:120px" width="26" height="830" viewBox="2 120 26 830"><path d="M8 127.3 H14.2 L16.6 130 H22.1 V138.8 H8 Z" fill="#afb1b3"/><circle cx="15.2" cy="232.5" r="3.3" fill="none" stroke="#afb1b3" stroke-width="2"/><path d="M6.9 232.5 H11.4 M19 232.5 H22.8" stroke="#afb1b3" stroke-width="2" fill="none"/><rect x="8.9" y="367" width="3.2" height="14" fill="#afb1b3"/><path d="M12.3 372 L17.2 367.8 V376.2 Z" fill="#afb1b3"/><path d="M17 372 H20.7 V380" fill="none" stroke="#afb1b3" stroke-width="3"/><rect x="15.6" y="822.6" width="5.1" height="4.9" fill="#afb1b3"/><rect x="9.2" y="828.8" width="4.9" height="4.9" fill="#afb1b3"/><rect x="15.6" y="828.8" width="5.1" height="4.9" fill="#afb1b3"/><path d="M14.90 930.60 L16.90 936.15 L22.79 936.34 L18.13 939.95 L19.78 945.61 L14.90 942.30 L10.02 945.61 L11.67 939.95 L7.01 936.34 L12.90 936.15 Z" fill="#afb1b3"/></svg>
<svg style="left:1822px;top:70px" width="26" height="805" viewBox="1822 70 26 805"><path d="M1829.6 84 V75.6 H1842.9" fill="none" stroke="#afb1b3" stroke-width="1.5"/><path d="M1827.1 84.6 H1837.4" fill="none" stroke="#afb1b3" stroke-width="1.6"/><rect x="1838.8" y="78" width="3.6" height="6" fill="none" stroke="#afb1b3" stroke-width="1.3"/><g transform="translate(1829 164.9) scale(0.97)"><path d="M8.6 0 L13.4 0 L3.6 9.8 L1.2 7.4 Z" fill="#54c5f8"/><path d="M8.6 7.6 L13.4 7.6 L8.4 12.6 L6 10.2 Z" fill="#54c5f8"/><path d="M6 10.2 L8.4 12.6 L13.4 17.4 L8.6 17.4 L3.6 12.6 Z" fill="#01579b"/><path d="M3.6 12.6 L6 10.2 L8.4 12.6 L6 15 Z" fill="#29b6f6"/></g><circle cx="1840.8" cy="178.8" r="3.3" fill="#3c3f41"/><circle cx="1840.8" cy="178.8" r="2.4" fill="#0fe00f"/><g transform="translate(1829 357) scale(0.97)"><path d="M8.6 0 L13.4 0 L3.6 9.8 L1.2 7.4 Z" fill="#54c5f8"/><path d="M8.6 7.6 L13.4 7.6 L8.4 12.6 L6 10.2 Z" fill="#54c5f8"/><path d="M6 10.2 L8.4 12.6 L13.4 17.4 L8.6 17.4 L3.6 12.6 Z" fill="#01579b"/><path d="M3.6 12.6 L6 10.2 L8.4 12.6 L6 15 Z" fill="#29b6f6"/></g><g transform="translate(1829 509.9) scale(0.97)"><path d="M8.6 0 L13.4 0 L3.6 9.8 L1.2 7.4 Z" fill="#54c5f8"/><path d="M8.6 7.6 L13.4 7.6 L8.4 12.6 L6 10.2 Z" fill="#54c5f8"/><path d="M6 10.2 L8.4 12.6 L13.4 17.4 L8.6 17.4 L3.6 12.6 Z" fill="#01579b"/><path d="M3.6 12.6 L6 10.2 L8.4 12.6 L6 15 Z" fill="#29b6f6"/></g><circle cx="1840.8" cy="523.8" r="3.3" fill="#3c3f41"/><circle cx="1840.8" cy="523.8" r="2.4" fill="#0fe00f"/><g transform="translate(1835 868.2) rotate(8)" fill="none" stroke="#afb1b3" stroke-width="1.4"><path d="M-2.9 -2.9 A4.1 4.1 0 0 1 2.9 -2.9"/><path d="M-5.3 -5.3 A7.5 7.5 0 0 1 5.3 -5.3"/><path d="M-7.8 -7.8 A11 11 0 0 1 7.8 -7.8"/><circle cx="0" cy="0" r="1.1" fill="#afb1b3" stroke="none"/></g></svg>
<svg style="left:1724px;top:104px" width="88" height="18" viewBox="1724 104 88 18"><path d="M1727 110.4 L1731.6 115 L1739 107" fill="none" stroke="#499c54" stroke-width="3"/><path d="M1726 120 L1728.4 117.6 L1730.8 120 L1733.2 117.6 L1735.6 120 L1738 117.6 L1739.6 119.2" fill="none" stroke="#499c54" stroke-width="1"/><path d="M1773.2 114.3 L1778 108.9 L1782.8 114.3" fill="none" stroke="#c3c3c3" stroke-width="1.5"/><path d="M1800.1 109.9 L1805 115.3 L1809.9 109.9" fill="none" stroke="#c3c3c3" stroke-width="1.5"/></svg>
<svg style="left:528px;top:595px" width="16" height="21" viewBox="528 595 16 21"><path d="M536 597 A6.3 6.3 0 0 1 542.3 603.3 C542.3 606 540.2 607.4 539.9 610 H532.1 C531.8 607.4 529.7 606 529.7 603.3 A6.3 6.3 0 0 1 536 597 Z" fill="#f0a732"/><rect x="532.2" y="611" width="7.6" height="1.5" fill="#c8c8c8"/><rect x="533.2" y="613.2" width="5.6" height="1.8" fill="#9a9c9e"/></svg>
<svg style="left:38px;top:964px" width="1698" height="20" viewBox="38 964 1698 20"><rect x="41" y="967.8" width="3" height="13" fill="#afb1b3"/><path d="M44 975.6 H50.3 V972" fill="none" stroke="#afb1b3" stroke-width="2.6"/><path d="M46.2 972.8 L50.3 967.2 L54.4 972.8 Z" fill="#afb1b3"/><rect x="104.4" y="968.4" width="3.2" height="2.3" fill="#afb1b3"/><rect x="109.2" y="968.4" width="8.2" height="2.3" fill="#afb1b3"/><rect x="104.4" y="972.6" width="3.2" height="2.3" fill="#afb1b3"/><rect x="109.2" y="972.6" width="8.2" height="2.3" fill="#afb1b3"/><rect x="104.4" y="976.8" width="3.2" height="2.3" fill="#afb1b3"/><rect x="109.2" y="976.8" width="8.2" height="2.3" fill="#afb1b3"/><circle cx="199.2" cy="973" r="6.3" fill="#afb1b3"/><rect x="198.2" y="969" width="2" height="4.8" fill="#3c3f41"/><rect x="198.2" y="975.2" width="2" height="2" fill="#3c3f41"/><rect x="303" y="967.3" width="14" height="12.5" fill="#afb1b3"/><path d="M305.4 970 L308.6 972.8 L305.4 975.6" fill="none" stroke="#3c3f41" stroke-width="1.4"/><rect x="309.4" y="975.6" width="4.6" height="1.4" fill="#3c3f41"/><path d="M415.4 966.8 L421.4 967.6 L425.9 972.4 L425.9 979.2 L423.4 979.2 L423.4 981.6 L416.6 981.6 L410.8 975.6 L411.8 970.4 Z" fill="#afb1b3"/><path d="M412.2 969.6 L423.6 980.8" stroke="#3c3f41" stroke-width="1.3"/><path d="M550.2 968.2 L560.2 974.2 L550.2 980.2 Z" fill="#a3a5a7"/><path d="M1725.1 966.1 A7.9 7.9 0 0 1 1733 974 V981.9 H1725.1 A7.9 7.9 0 0 1 1725.1 966.1 Z" fill="#499c54"/></svg>
<span style="left:1721.90px;top:968.47px;font-size:11.5px;line-height:11.5px;color:#ffffff;font-weight:700;">1</span>
<svg style="left:6px;top:989px" width="1834" height="22" viewBox="6 989 1834 22"><rect x="11.4" y="992.6" width="12.2" height="12.2" fill="none" stroke="#afb1b3" stroke-width="1.3"/><path d="M8.7 995.6 V1007.4 H20.8" fill="none" stroke="#afb1b3" stroke-width="1.4"/><circle cx="1673.3" cy="994" r="1.9" fill="#afb1b3"/><circle cx="1673.3" cy="1006.6" r="1.9" fill="#afb1b3"/><circle cx="1681" cy="995.2" r="1.9" fill="#afb1b3"/><path d="M1673.3 994 V1006.6 M1681 995.2 C1681 1000.4 1673.3 999.6 1673.3 1003.6" fill="none" stroke="#afb1b3" stroke-width="1.5"/><rect x="1763" y="998.7" width="10.1" height="7.4" fill="#afb1b3"/><path d="M1760.2 999.4 V997 A3.1 3.3 0 0 1 1766.4 997 V999" fill="none" stroke="#afb1b3" stroke-width="1.7"/><circle cx="1797.8" cy="999.9" r="9" fill="#afb1b3"/><circle cx="1794.6" cy="997.4" r="1.2" fill="#3c3f41"/><circle cx="1801" cy="997.4" r="1.2" fill="#3c3f41"/><path d="M1793.2 1002.4 Q1797.8 1006.8 1802.4 1002.4" fill="none" stroke="#3c3f41" stroke-width="1.4"/><circle cx="1828" cy="999.9" r="9" fill="#afb1b3"/><circle cx="1824.8" cy="997.4" r="1.2" fill="#3c3f41"/><circle cx="1831.2" cy="997.4" r="1.2" fill="#3c3f41"/><path d="M1823.6 1005 Q1828 1001 1832.4 1005" fill="none" stroke="#3c3f41" stroke-width="1.4"/></svg>
</body></html>
